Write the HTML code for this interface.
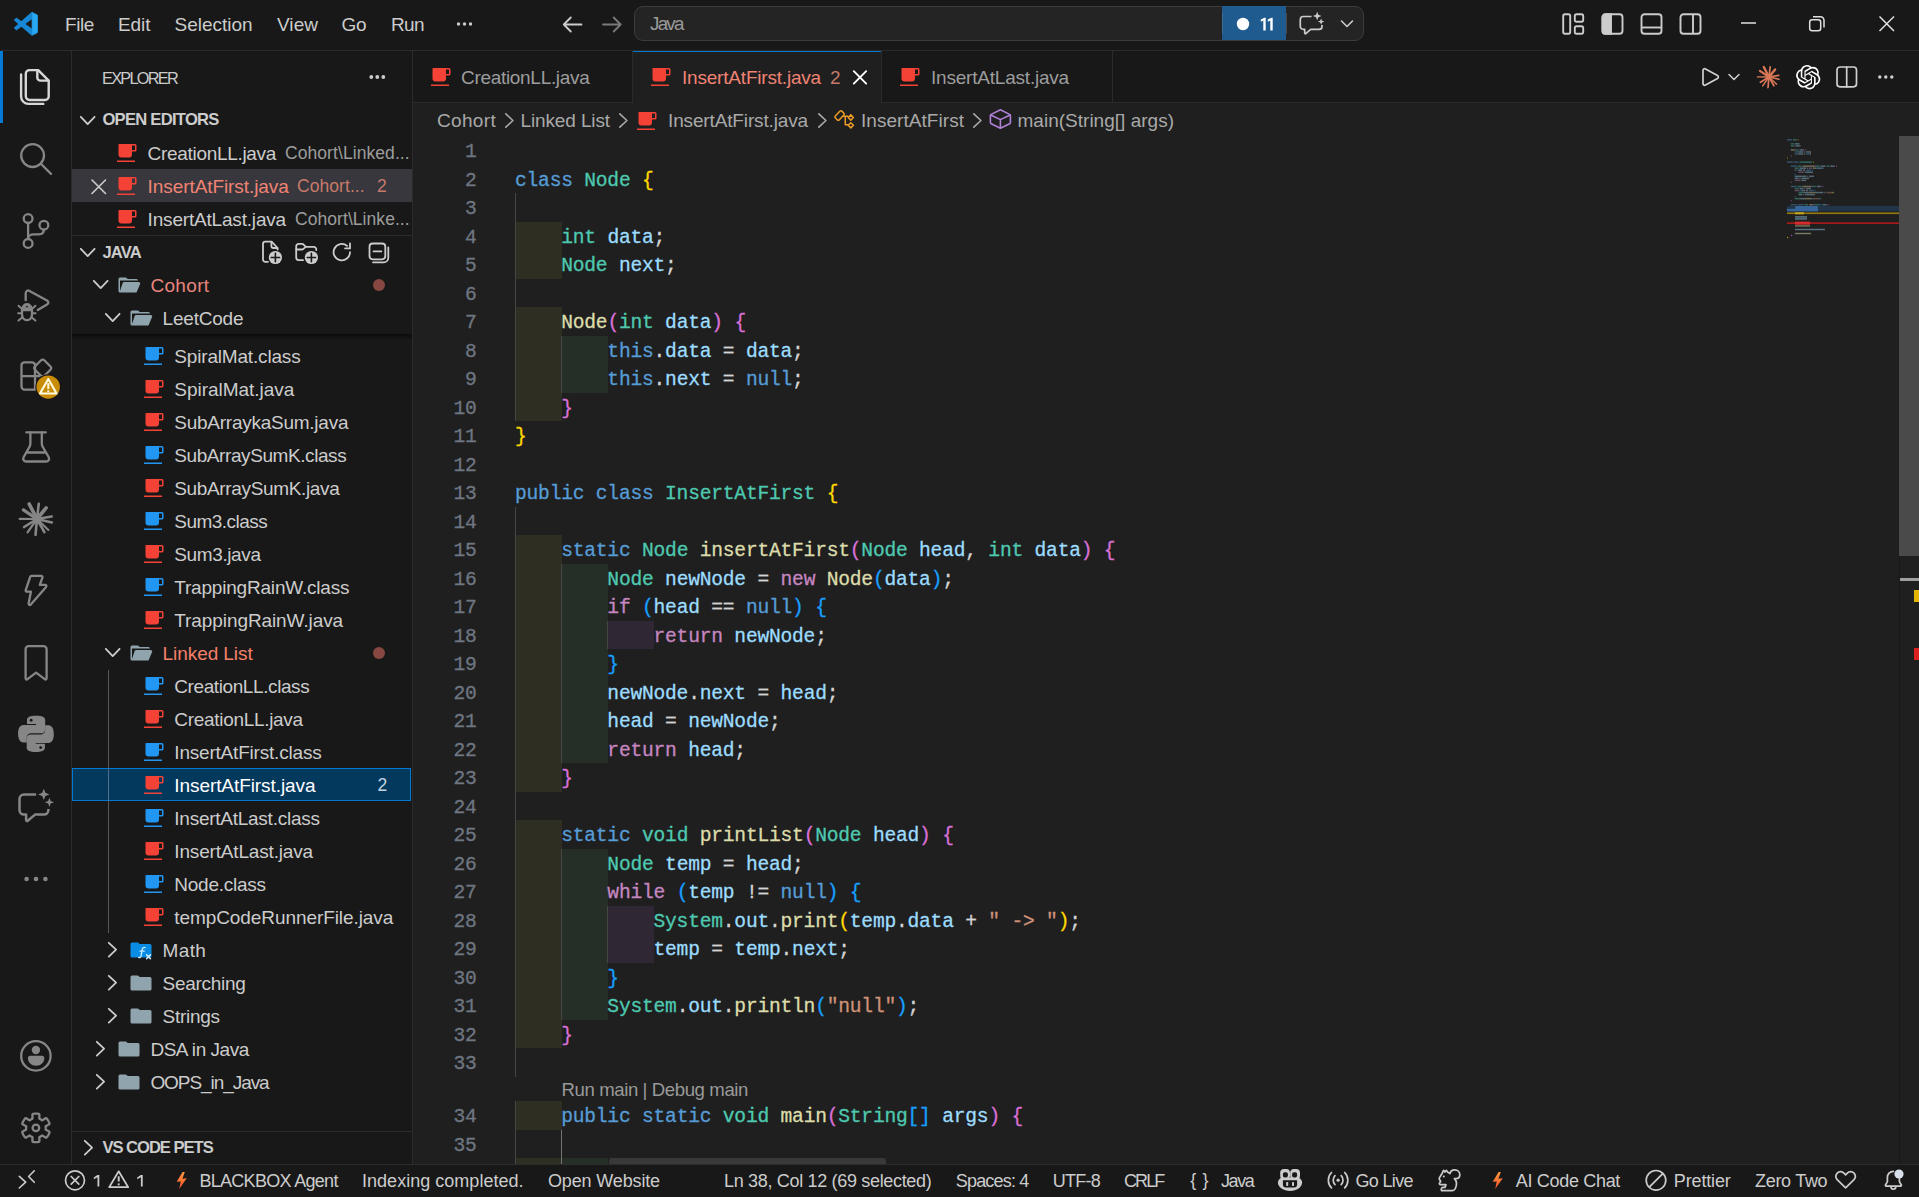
<!DOCTYPE html>
<html><head><meta charset="utf-8"><title>InsertAtFirst.java - Java - Visual Studio Code</title>
<style>
html,body{margin:0;padding:0;background:#1f1f1f;}
body{width:1919px;height:1197px;overflow:hidden;position:relative;font-family:"Liberation Sans",sans-serif;}
.a{position:absolute;}
.t{position:absolute;white-space:pre;}
svg{position:absolute;overflow:visible;}
.ln{position:absolute;left:413px;width:63.5px;text-align:right;font-family:"Liberation Mono",monospace;font-size:19.6px;letter-spacing:-0.215px;color:#6e7681;white-space:pre;-webkit-text-stroke:0.3px currentColor;}
.cl{position:absolute;left:515px;font-family:"Liberation Mono",monospace;font-size:19.6px;letter-spacing:-0.215px;color:#d4d4d4;white-space:pre;-webkit-text-stroke:0.3px currentColor;}
.k{color:#569cd6}.ty{color:#4ec9b0}.c{color:#c586c0}.f{color:#dcdcaa}.v{color:#9cdcfe}.s{color:#ce9178}
.b1{color:#ffd700}.b2{color:#da70d6}.b3{color:#179fff}
</style></head>
<body>
<div class="a" style="left:0px;top:0px;width:1919px;height:50px;background:#181818;"></div>
<div class="a" style="left:0px;top:50px;width:1919px;height:1px;background:#2b2b2b;"></div>
<div class="a" style="left:0px;top:51px;width:71px;height:1113px;background:#181818;"></div>
<div class="a" style="left:71px;top:51px;width:1px;height:1113px;background:#2b2b2b;"></div>
<div class="a" style="left:72px;top:51px;width:340px;height:1113px;background:#181818;"></div>
<div class="a" style="left:412px;top:51px;width:1px;height:1113px;background:#2b2b2b;"></div>
<div class="a" style="left:413px;top:51px;width:1506px;height:51px;background:#181818;"></div>
<div class="a" style="left:413px;top:102px;width:1506px;height:1px;background:#2b2b2b;"></div>
<div class="a" style="left:0px;top:1164px;width:1919px;height:33px;background:#181818;"></div>
<div class="a" style="left:0px;top:1164px;width:1919px;height:1px;background:#2b2b2b;"></div>
<svg style="left:0;top:0" width="50" height="50"><g stroke-linejoin="round" stroke-width="0.7"><path fill="#1788d6" stroke="#1788d6" d="M31.700 12.300 31.700 19 16.500 30 14.100 27.900z"/><path fill="#1788d6" stroke="#1788d6" d="M31.700 35.300 31.700 28.700 16.500 18.100 14.100 20.100z"/><path fill="#27a6f2" stroke="#27a6f2" d="M32.100 12.300 37.200 14.900 37.500 15.600 37.500 32.100 37.200 32.800 32.100 35.300z"/></g></svg>
<svg style="left:455px;top:20px" width="20" height="8"><circle cx="3.5" cy="4" r="1.7" fill="#ccc"/><circle cx="9.5" cy="4" r="1.7" fill="#ccc"/><circle cx="15.500" cy="4" r="1.7" fill="#ccc"/></svg>
<svg style="left:560px;top:12px" width="66" height="26" fill="none" stroke-width="1.8" stroke-linecap="round" stroke-linejoin="round"><path stroke="#cccccc" d="M21.500 12.500H3.800M10.800 5.500 3.800 12.500 10.800 19.500"/><path stroke="#7a7a7a" d="M43 12.500H60.700M53.700 5.500 60.700 12.500 53.700 19.500"/></svg>
<div class="a" style="left:634px;top:6px;width:728px;height:33px;background:#242424;border:1px solid #3c3c3c;border-radius:9px;box-sizing:content-box"></div>
<div class="a" style="left:1222px;top:6px;width:64px;height:34.3px;background:#1f5b8e;"></div>
<svg style="left:1222px;top:7px" width="142" height="33"><circle cx="21" cy="17" r="6.200" fill="#fff"/><rect x="0" y="6" width="1" height="21" fill="#3c6d98"/><rect x="64" y="6" width="1" height="21" fill="#4a4a4a"/></svg>
<svg style="left:1260.300px;top:14px" width="20" height="20"><path fill="#fff" d="M5.700 3.700V16.500H3.300V6.500L.8 7.700V5.500L4.400 3.700zM12.700 3.700V16.500H10.300V6.500L7.800 7.700V5.500L11.400 3.700z"/></svg>
<svg style="left:0;top:0" width="1400" height="50" fill="none" stroke="#cccccc" stroke-width="1.700" stroke-linecap="butt" stroke-linejoin="round"><path d="M1311.500 16.500H1303.300a3 3 0 0 0-3 3V26.400a3 3 0 0 0 3 3h1.400v3.700c0 .6.700.9 1.100.5l4.900-4.200h8.300a3 3 0 0 0 3-3v-1.400"/><path fill="#cccccc" stroke="none" d="M1317.200 11.800l1.150 3.050 3.050 1.150-3.050 1.150-1.150 3.050-1.150-3.050-3.050-1.150 3.050-1.150zM1321.100 18.400l.9 2.300 2.300.9-2.300.9-.9 2.300-.9-2.300-2.300-.9 2.300-.9z"/></svg>
<svg style="left:1340px;top:19px" width="14" height="10" fill="none" stroke="#cccccc" stroke-width="1.600" stroke-linecap="round" stroke-linejoin="round"><path d="M1.500 2 7 7.500 12.500 2"/></svg>
<svg style="left:1560px;top:12px" width="150" height="26" fill="none" stroke="#cccccc" stroke-width="1.900">
<rect x="3.200" y="2.300" width="7" height="19.400" rx="1.800"/><rect x="14.800" y="2.300" width="8.400" height="7.400" rx="1.800"/><rect x="14.800" y="14.300" width="8.400" height="7.400" rx="1.800"/>
<rect x="42.500" y="2.300" width="20" height="19.400" rx="3"/><path d="M42.500 5.300a3 3 0 0 1 3-3H51v19.400h-5.500a3 3 0 0 1-3-3z" fill="#cccccc"/>
<rect x="81.500" y="2.300" width="20" height="19.400" rx="3"/><path d="M81.500 15.500h20"/>
<rect x="120.500" y="2.300" width="20" height="19.400" rx="3"/><path d="M133 2.300v19.400"/>
</svg>
<svg style="left:1736px;top:10px" width="170" height="30" fill="none" stroke="#e0e0e0" stroke-width="1.500"><path d="M5 13h15"/><rect x="73.700" y="9.700" width="11" height="11" rx="2.500"/><path d="M77 6.700h7.500a3.500 3.500 0 0 1 3.500 3.500V17.500" /><path d="M143.500 6.500l14.500 14.500M158 6.500l-14.500 14.500"/></svg>
<div class="a" style="left:0px;top:51px;width:3px;height:72px;background:#0078d4;"></div>
<svg style="left:0;top:0" width="72" height="1164"><g stroke="#d7d7d7" stroke-width="2.400" fill="none" stroke-linejoin="round" stroke-linecap="round"><path d="M37.300 70.100H29.500a3.700 3.700 0 0 0-3.700 3.700V96.300a3.700 3.700 0 0 0 3.700 3.700H45a3.700 3.700 0 0 0 3.700-3.700V80.600L38.200 70.100z"/><path d="M37.300 70.300V77.400a3.200 3.200 0 0 0 3.200 3.200H48.500"/><path d="M21.100 74.500V96.500a7.400 7.400 0 0 0 7.400 7.400H43.300"/></g><g stroke="#868686" stroke-width="2.300" fill="none" stroke-linecap="round"><circle cx="32.600" cy="155.600" r="11.400"/><path d="M40.900 163.700 51 173.900"/></g><g stroke="#868686" stroke-width="2.300" fill="none" stroke-linecap="round"><circle cx="28.100" cy="218.600" r="4.400"/><circle cx="43.900" cy="225.200" r="4.400"/><circle cx="28.100" cy="243.400" r="4.400"/><path d="M28.100 223V239"/><path d="M43.900 229.600c0 3-2 4.800-5 4.800H33.500c-3 0-5.400 1.800-5.400 4.400"/></g><g stroke="#868686" stroke-width="2.300" fill="none" stroke-linecap="round" stroke-linejoin="round"><path d="M25.700 300.200V293.300c0-2.300 1.900-3.400 3.800-2.400L47 300.500c1.800 1 1.800 2.900 0 3.900L37.700 310"/><path d="M22 310.500c0-3.400 2-6.300 5-6.300s5 2.900 5 6.300v3.700c0 3.400-2.200 5.900-5 5.900s-5-2.500-5-5.900z"/><path d="M22.300 310.200H31.700"/><path d="M18.500 305.800l3.200 3M35.400 305.800l-3.200 3M18.200 313.300H22M32 313.300h3.600M18.500 320.600l3.600-3.200M35.400 320.600l-3.600-3.200" stroke-width="2"/></g><path d="M22.600 309.800c0-3.400 1.900-5.600 4.400-5.600s4.400 2.200 4.400 5.600z" fill="#868686"/><path d="M25.300 307.300l1.700-1.500 1.700 1.500z" fill="#181818"/><g stroke="#868686" stroke-width="2.300" fill="none" stroke-linejoin="round"><path d="M24.500 362.300H32a3 3 0 0 1 3 3V389.600H24.500a3 3 0 0 1-3-3V365.300a3 3 0 0 1 3-3z"/><path d="M21.500 376.100H46.500a0 0 0 0 1 0 0V386.600a3 3 0 0 1-3 3H35"/><path d="M41.100 360.300a2.200 2.200 0 0 1 3.200 0l6.200 6.200a2.200 2.200 0 0 1 0 3.200l-6.200 6.200a2.200 2.200 0 0 1-3.200 0l-6.200-6.200a2.200 2.200 0 0 1 0-3.200z"/></g><circle cx="48.200" cy="387.100" r="12.800" fill="#181818"/><circle cx="48.200" cy="387.100" r="11.700" fill="#c98c06"/><g stroke="#fffbe0" fill="none" stroke-linejoin="round" stroke-linecap="round"><path d="M48.300 379 56.600 393.500H40z" stroke-width="2.100"/><path d="M48.300 383.200V389" stroke-width="2" stroke-linecap="butt"/><path d="M48.300 390.300V392" stroke-width="2" stroke-linecap="butt"/></g><g stroke="#868686" stroke-width="2.300" fill="none" stroke-linecap="round" stroke-linejoin="round"><path d="M26.300 432.300H45.800"/><path d="M30.400 432.500V443.500c0 1.200-.3 2.200-.9 3.200L23.700 457c-1.200 2.200.1 4.500 2.600 4.500H46c2.500 0 3.800-2.300 2.600-4.500L42.700 446.700c-.6-1-.9-2-.9-3.200V432.500"/><path d="M26.800 452.500H45.400"/></g><g stroke="#868686" stroke-linecap="round" fill="none"><path d="M37.00 519.00L29.18 504.00" stroke-width="3.60"/><path d="M37.00 519.00L38.75 503.89" stroke-width="2.60"/><path d="M37.00 519.00L46.16 507.79" stroke-width="3.60"/><path d="M37.00 519.00L51.62 516.43" stroke-width="2.60"/><path d="M37.00 519.00L51.83 522.41" stroke-width="2.60"/><path d="M37.00 519.00L48.41 529.94" stroke-width="2.20"/><path d="M37.00 519.00L44.37 532.17" stroke-width="2.60"/><path d="M37.00 519.00L35.52 534.81" stroke-width="2.60"/><path d="M37.00 519.00L27.53 532.40" stroke-width="2.20"/><path d="M37.00 519.00L24.10 527.01" stroke-width="2.60"/><path d="M37.00 519.00L19.60 518.81" stroke-width="2.20"/><path d="M37.00 519.00L23.37 509.92" stroke-width="3.30"/><circle cx="37" cy="519" r="4.20" fill="#868686" stroke="none"/></g><path d="M31.400 575.900H41.200c.9 0 1.500.8 1.200 1.700L39.800 584.900h5.300c1.100 0 1.700 1.200 1 2.100L30.800 604.600c-.9 1-2.400.2-2.200-1.100L30.900 591.700H26.900c-.8 0-1.400-.7-1.200-1.500L30.200 576.800c.2-.6.700-.9 1.200-.9z" stroke="#868686" stroke-width="2.300" fill="none" stroke-linejoin="round"/><path d="M28.600 646.200H43.600a3 3 0 0 1 3 3V678.300c0 1-1.100 1.500-1.900.9L36.100 672.600 27.500 679.200c-.8.600-1.900.1-1.900-.9V649.200a3 3 0 0 1 3-3z" stroke="#868686" stroke-width="2.300" fill="none" stroke-linejoin="round"/><g transform="translate(8 706) scale(0.04678)" fill="#868686"><path d="M405 385 L405 300 C405 240 470 210 600 210 C730 210 795 240 795 300 L795 500 C795 550 760 585 710 585 L500 585 C440 585 400 620 400 680 L400 780 L330 780 C250 780 215 700 215 590 C215 480 250 405 330 405 L600 405 L600 385 Z"/><path d="M405 385 L405 300 C405 240 470 210 600 210 C730 210 795 240 795 300 L795 500 C795 550 760 585 710 585 L500 585 C440 585 400 620 400 680 L400 780 L330 780 C250 780 215 700 215 590 C215 480 250 405 330 405 L600 405 L600 385 Z" transform="rotate(180 597 597)"/><circle cx="495" cy="305" r="30" fill="#181818"/><circle cx="699" cy="889" r="30" fill="#181818"/></g><g stroke="#868686" stroke-width="2.500" fill="none" stroke-linecap="butt" stroke-linejoin="round"><path d="M36.100 794.500H24a4.500 4.500 0 0 0-4.500 4.500V810.100a4.500 4.500 0 0 0 4.500 4.500h2.100V820c0 .9 1 1.400 1.700.8L35 814.600H43.900a4.500 4.500 0 0 0 4.500-4.500V809"/></g><path fill="#868686" d="M43.800 788.700l1.600 4.100 4.100 1.600-4.100 1.600-1.600 4.100-1.600-4.100-4.100-1.600 4.100-1.600zM49.400 797.700l1.250 3.350 3.350 1.250-3.350 1.250-1.250 3.350-1.250-3.350-3.350-1.250 3.350-1.250z"/><g fill="#868686"><circle cx="26.600" cy="879" r="2.300"/><circle cx="36" cy="879" r="2.300"/><circle cx="45.400" cy="879" r="2.300"/></g><circle cx="35.900" cy="1055.900" r="14.700" stroke="#868686" stroke-width="2.300" fill="none"/><circle cx="35.900" cy="1050" r="4.200" fill="#868686"/><path d="M30.100 1055.800H42.100c1.300 0 2.200 1 2.200 2.200 0 4.600-3.500 7.700-8.200 7.700s-8.200-3.100-8.200-7.700c0-1.200.9-2.200 2.200-2.200z" fill="#868686"/><path d="M45.70 1127.90L45.70 1128.07L45.69 1128.24L45.69 1128.41L45.68 1128.58L45.66 1128.75L45.65 1128.92L45.63 1129.09L45.60 1129.26L45.58 1129.43L45.70 1129.63L46.11 1129.88L46.73 1130.20L47.48 1130.57L48.24 1130.98L48.89 1131.38L49.36 1131.76L49.55 1132.07L49.50 1132.32L49.42 1132.56L49.34 1132.79L49.25 1133.02L49.16 1133.26L49.06 1133.49L48.96 1133.72L48.86 1133.94L48.75 1134.17L48.64 1134.39L48.53 1134.61L48.41 1134.83L48.28 1135.05L48.16 1135.27L48.03 1135.48L47.89 1135.69L47.76 1135.90L47.61 1136.10L47.47 1136.31L47.32 1136.51L47.17 1136.70L47.01 1136.90L46.85 1137.09L46.69 1137.28L46.53 1137.47L46.34 1137.64L45.97 1137.62L45.41 1137.41L44.73 1137.05L44.00 1136.59L43.31 1136.13L42.72 1135.75L42.30 1135.53L42.07 1135.52L41.93 1135.62L41.80 1135.73L41.66 1135.83L41.52 1135.93L41.38 1136.02L41.24 1136.12L41.09 1136.21L40.95 1136.30L40.80 1136.39L40.65 1136.47L40.50 1136.55L40.35 1136.63L40.20 1136.71L40.04 1136.78L39.89 1136.85L39.73 1136.92L39.57 1136.99L39.41 1137.05L39.30 1137.26L39.29 1137.73L39.32 1138.43L39.37 1139.26L39.40 1140.12L39.38 1140.89L39.29 1141.48L39.11 1141.81L38.87 1141.89L38.63 1141.94L38.38 1141.98L38.14 1142.02L37.89 1142.06L37.64 1142.09L37.39 1142.12L37.15 1142.15L36.90 1142.17L36.65 1142.18L36.40 1142.19L36.15 1142.20L35.90 1142.20L35.65 1142.20L35.40 1142.19L35.15 1142.18L34.90 1142.17L34.65 1142.15L34.41 1142.12L34.16 1142.09L33.91 1142.06L33.66 1142.02L33.42 1141.98L33.17 1141.94L32.93 1141.89L32.69 1141.81L32.51 1141.48L32.42 1140.89L32.40 1140.12L32.43 1139.26L32.48 1138.43L32.51 1137.73L32.50 1137.26L32.39 1137.05L32.23 1136.99L32.07 1136.92L31.91 1136.85L31.76 1136.78L31.60 1136.71L31.45 1136.63L31.30 1136.55L31.15 1136.47L31.00 1136.39L30.85 1136.30L30.71 1136.21L30.56 1136.12L30.42 1136.02L30.28 1135.93L30.14 1135.83L30.00 1135.73L29.87 1135.62L29.73 1135.52L29.50 1135.53L29.08 1135.75L28.49 1136.13L27.80 1136.59L27.07 1137.05L26.39 1137.41L25.83 1137.62L25.46 1137.64L25.27 1137.47L25.11 1137.28L24.95 1137.09L24.79 1136.90L24.63 1136.70L24.48 1136.51L24.33 1136.31L24.19 1136.10L24.04 1135.90L23.91 1135.69L23.77 1135.48L23.64 1135.27L23.52 1135.05L23.39 1134.83L23.27 1134.61L23.16 1134.39L23.05 1134.17L22.94 1133.94L22.84 1133.72L22.74 1133.49L22.64 1133.26L22.55 1133.02L22.46 1132.79L22.38 1132.56L22.30 1132.32L22.25 1132.07L22.44 1131.76L22.91 1131.38L23.56 1130.98L24.32 1130.57L25.07 1130.20L25.69 1129.88L26.10 1129.63L26.22 1129.43L26.20 1129.26L26.17 1129.09L26.15 1128.92L26.14 1128.75L26.12 1128.58L26.11 1128.41L26.11 1128.24L26.10 1128.07L26.10 1127.90L26.10 1127.73L26.11 1127.56L26.11 1127.39L26.12 1127.22L26.14 1127.05L26.15 1126.88L26.17 1126.71L26.20 1126.54L26.22 1126.37L26.10 1126.17L25.69 1125.92L25.07 1125.60L24.32 1125.23L23.56 1124.82L22.91 1124.42L22.44 1124.04L22.25 1123.73L22.30 1123.48L22.38 1123.24L22.46 1123.01L22.55 1122.78L22.64 1122.54L22.74 1122.31L22.84 1122.08L22.94 1121.86L23.05 1121.63L23.16 1121.41L23.27 1121.19L23.39 1120.97L23.52 1120.75L23.64 1120.53L23.77 1120.32L23.91 1120.11L24.04 1119.90L24.19 1119.70L24.33 1119.49L24.48 1119.29L24.63 1119.10L24.79 1118.90L24.95 1118.71L25.11 1118.52L25.27 1118.33L25.46 1118.16L25.83 1118.18L26.39 1118.39L27.07 1118.75L27.80 1119.21L28.49 1119.67L29.08 1120.05L29.50 1120.27L29.73 1120.28L29.87 1120.18L30.00 1120.07L30.14 1119.97L30.28 1119.87L30.42 1119.78L30.56 1119.68L30.71 1119.59L30.85 1119.50L31.00 1119.41L31.15 1119.33L31.30 1119.25L31.45 1119.17L31.60 1119.09L31.76 1119.02L31.91 1118.95L32.07 1118.88L32.23 1118.81L32.39 1118.75L32.50 1118.54L32.51 1118.07L32.48 1117.37L32.43 1116.54L32.40 1115.68L32.42 1114.91L32.51 1114.32L32.69 1113.99L32.93 1113.91L33.17 1113.86L33.42 1113.82L33.66 1113.78L33.91 1113.74L34.16 1113.71L34.41 1113.68L34.65 1113.65L34.90 1113.63L35.15 1113.62L35.40 1113.61L35.65 1113.60L35.90 1113.60L36.15 1113.60L36.40 1113.61L36.65 1113.62L36.90 1113.63L37.15 1113.65L37.39 1113.68L37.64 1113.71L37.89 1113.74L38.14 1113.78L38.38 1113.82L38.63 1113.86L38.87 1113.91L39.11 1113.99L39.29 1114.32L39.38 1114.91L39.40 1115.68L39.37 1116.54L39.32 1117.37L39.29 1118.07L39.30 1118.54L39.41 1118.75L39.57 1118.81L39.73 1118.88L39.89 1118.95L40.04 1119.02L40.20 1119.09L40.35 1119.17L40.50 1119.25L40.65 1119.33L40.80 1119.41L40.95 1119.50L41.09 1119.59L41.24 1119.68L41.38 1119.78L41.52 1119.87L41.66 1119.97L41.80 1120.07L41.93 1120.18L42.07 1120.28L42.30 1120.27L42.72 1120.05L43.31 1119.67L44.00 1119.21L44.73 1118.75L45.41 1118.39L45.97 1118.18L46.34 1118.16L46.53 1118.33L46.69 1118.52L46.85 1118.71L47.01 1118.90L47.17 1119.10L47.32 1119.29L47.47 1119.49L47.61 1119.70L47.76 1119.90L47.89 1120.11L48.03 1120.32L48.16 1120.53L48.28 1120.75L48.41 1120.97L48.53 1121.19L48.64 1121.41L48.75 1121.63L48.86 1121.86L48.96 1122.08L49.06 1122.31L49.16 1122.54L49.25 1122.78L49.34 1123.01L49.42 1123.24L49.50 1123.48L49.55 1123.73L49.36 1124.04L48.89 1124.42L48.24 1124.82L47.48 1125.23L46.73 1125.60L46.11 1125.92L45.70 1126.17L45.58 1126.37L45.60 1126.54L45.63 1126.71L45.65 1126.88L45.66 1127.05L45.68 1127.22L45.69 1127.39L45.69 1127.56L45.70 1127.73Z" stroke="#868686" stroke-width="2.300" fill="none" stroke-linejoin="round"/><circle cx="35.900" cy="1127.900" r="3.300" stroke="#868686" stroke-width="2.300" fill="none"/></svg>
<svg style="left:368px;top:73px" width="20" height="8"><circle cx="3.300" cy="4" r="1.900" fill="#ccc"/><circle cx="9.300" cy="4" r="1.900" fill="#ccc"/><circle cx="15.300" cy="4" r="1.900" fill="#ccc"/></svg>
<svg style="left:79.5px;top:115.50px" width="15.4" height="10.4" fill="none" stroke="#cccccc" stroke-width="1.8" stroke-linecap="round" stroke-linejoin="round"><path d="M0.800 0.800 7.70 8.10 14.60 0.800"/></svg>
<div class="a" style="left:72px;top:169px;width:339.5px;height:33px;background:#37373d;"></div>
<svg style="left:114px;top:141px" width="24" height="24" viewBox="0 0 32 32"><path fill="#f44336" d="M4 26h24v2H4zM28 4H7a1 1 0 0 0-1 1v13a4 4 0 0 0 4 4h10a4 4 0 0 0 4-4v-4h4a2 2 0 0 0 2-2V6a2 2 0 0 0-2-2m0 8h-4V6h4z"/></svg>
<svg style="left:114px;top:174px" width="24" height="24" viewBox="0 0 32 32"><path fill="#f44336" d="M4 26h24v2H4zM28 4H7a1 1 0 0 0-1 1v13a4 4 0 0 0 4 4h10a4 4 0 0 0 4-4v-4h4a2 2 0 0 0 2-2V6a2 2 0 0 0-2-2m0 8h-4V6h4z"/></svg>
<svg style="left:114px;top:207px" width="24" height="24" viewBox="0 0 32 32"><path fill="#f44336" d="M4 26h24v2H4zM28 4H7a1 1 0 0 0-1 1v13a4 4 0 0 0 4 4h10a4 4 0 0 0 4-4v-4h4a2 2 0 0 0 2-2V6a2 2 0 0 0-2-2m0 8h-4V6h4z"/></svg>
<svg style="left:90px;top:178px" width="18" height="18" fill="none" stroke="#cccccc" stroke-width="1.600" stroke-linecap="round"><path d="M2 2 15.500 15.500M15.500 2 2 15.500"/></svg>
<div class="a" style="left:72px;top:235px;width:340px;height:1px;background:#2b2b2b;"></div>
<svg style="left:79.5px;top:248.30px" width="15.4" height="10.4" fill="none" stroke="#cccccc" stroke-width="1.8" stroke-linecap="round" stroke-linejoin="round"><path d="M0.800 0.800 7.70 8.10 14.60 0.800"/></svg>
<svg style="left:254px;top:236px" width="144" height="34" fill="none" stroke="#cccccc" stroke-width="1.800" stroke-linejoin="round" stroke-linecap="round">
<path d="M14 25.800H11.300a2.300 2.300 0 0 1-2.300-2.300V8a2.300 2.300 0 0 1 2.300-2.300H17.600L23.600 12V13.500"/><path d="M17.400 6V10a2 2 0 0 0 2 2H23.300"/>
<circle cx="21.400" cy="21.500" r="6.600" fill="#cccccc" stroke="none"/><path d="M21.400 17.300v8.400M17.200 21.500h8.400" stroke="#181818" stroke-width="1.600"/>
<path d="M49 24.200H44.800a2.600 2.600 0 0 1-2.600-2.600V10.500a2.600 2.600 0 0 1 2.600-2.600H47.800c.8 0 1.500.3 2 .9L52 10.900H59.700a2.600 2.600 0 0 1 2.600 2.600V14"/><path d="M42.300 13.500H47.600c.8 0 1.500-.3 2-.9l2.200-1.700"/>
<circle cx="57.400" cy="21.500" r="6.600" fill="#cccccc" stroke="none"/><path d="M57.400 17.300v8.400M53.200 21.500h8.400" stroke="#181818" stroke-width="1.600"/>
<path d="M96 16.100a8.200 8.200 0 1 1-2.900-6.200"/><path d="M96 7.500v4.900h-4.900"/>
<rect x="115.500" y="7.500" width="15.800" height="15.800" rx="3.200"/><path d="M119.500 15.400h7.800"/><path d="M119 26.300H129.800a4.500 4.500 0 0 0 4.500-4.500V11.500"/>
</svg>
<svg style="left:92.6px;top:280.40px" width="15.4" height="10.4" fill="none" stroke="#cccccc" stroke-width="1.8" stroke-linecap="round" stroke-linejoin="round"><path d="M0.800 0.800 7.70 8.10 14.60 0.800"/></svg>
<svg style="left:117px;top:273px" width="24" height="24" viewBox="0 0 32 32"><path fill="#90a4ae" d="M28.967 12H9.442a2 2 0 0 0-1.898 1.368L4 24V10h24a2 2 0 0 0-2-2H15.124a2 2 0 0 1-1.280-.464l-1.288-1.072A2 2 0 0 0 11.276 6H4a2 2 0 0 0-2 2v16a2 2 0 0 0 2 2h22l4.805-11.212A2 2 0 0 0 28.967 12"/></svg>
<div class="a" style="left:373.300px;top:279px;width:12px;height:12px;border-radius:6px;background:#864741"></div>
<svg style="left:104.6px;top:313.40px" width="15.4" height="10.4" fill="none" stroke="#cccccc" stroke-width="1.8" stroke-linecap="round" stroke-linejoin="round"><path d="M0.800 0.800 7.70 8.10 14.60 0.800"/></svg>
<svg style="left:129px;top:306px" width="24" height="24" viewBox="0 0 32 32"><path fill="#90a4ae" d="M28.967 12H9.442a2 2 0 0 0-1.898 1.368L4 24V10h24a2 2 0 0 0-2-2H15.124a2 2 0 0 1-1.280-.464l-1.288-1.072A2 2 0 0 0 11.276 6H4a2 2 0 0 0-2 2v16a2 2 0 0 0 2 2h22l4.805-11.212A2 2 0 0 0 28.967 12"/></svg>
<div class="a" style="left:72px;top:333.500px;width:340px;height:6px;background:linear-gradient(#0b0b0b,rgba(24,24,24,0))"></div>
<svg style="left:141px;top:344px" width="24" height="24" viewBox="0 0 32 32"><path fill="#2196f3" d="M4 26h24v2H4zM28 4H7a1 1 0 0 0-1 1v13a4 4 0 0 0 4 4h10a4 4 0 0 0 4-4v-4h4a2 2 0 0 0 2-2V6a2 2 0 0 0-2-2m0 8h-4V6h4z"/></svg>
<svg style="left:141px;top:377px" width="24" height="24" viewBox="0 0 32 32"><path fill="#f44336" d="M4 26h24v2H4zM28 4H7a1 1 0 0 0-1 1v13a4 4 0 0 0 4 4h10a4 4 0 0 0 4-4v-4h4a2 2 0 0 0 2-2V6a2 2 0 0 0-2-2m0 8h-4V6h4z"/></svg>
<svg style="left:141px;top:410px" width="24" height="24" viewBox="0 0 32 32"><path fill="#f44336" d="M4 26h24v2H4zM28 4H7a1 1 0 0 0-1 1v13a4 4 0 0 0 4 4h10a4 4 0 0 0 4-4v-4h4a2 2 0 0 0 2-2V6a2 2 0 0 0-2-2m0 8h-4V6h4z"/></svg>
<svg style="left:141px;top:443px" width="24" height="24" viewBox="0 0 32 32"><path fill="#2196f3" d="M4 26h24v2H4zM28 4H7a1 1 0 0 0-1 1v13a4 4 0 0 0 4 4h10a4 4 0 0 0 4-4v-4h4a2 2 0 0 0 2-2V6a2 2 0 0 0-2-2m0 8h-4V6h4z"/></svg>
<svg style="left:141px;top:476px" width="24" height="24" viewBox="0 0 32 32"><path fill="#f44336" d="M4 26h24v2H4zM28 4H7a1 1 0 0 0-1 1v13a4 4 0 0 0 4 4h10a4 4 0 0 0 4-4v-4h4a2 2 0 0 0 2-2V6a2 2 0 0 0-2-2m0 8h-4V6h4z"/></svg>
<svg style="left:141px;top:509px" width="24" height="24" viewBox="0 0 32 32"><path fill="#2196f3" d="M4 26h24v2H4zM28 4H7a1 1 0 0 0-1 1v13a4 4 0 0 0 4 4h10a4 4 0 0 0 4-4v-4h4a2 2 0 0 0 2-2V6a2 2 0 0 0-2-2m0 8h-4V6h4z"/></svg>
<svg style="left:141px;top:542px" width="24" height="24" viewBox="0 0 32 32"><path fill="#f44336" d="M4 26h24v2H4zM28 4H7a1 1 0 0 0-1 1v13a4 4 0 0 0 4 4h10a4 4 0 0 0 4-4v-4h4a2 2 0 0 0 2-2V6a2 2 0 0 0-2-2m0 8h-4V6h4z"/></svg>
<svg style="left:141px;top:575px" width="24" height="24" viewBox="0 0 32 32"><path fill="#2196f3" d="M4 26h24v2H4zM28 4H7a1 1 0 0 0-1 1v13a4 4 0 0 0 4 4h10a4 4 0 0 0 4-4v-4h4a2 2 0 0 0 2-2V6a2 2 0 0 0-2-2m0 8h-4V6h4z"/></svg>
<svg style="left:141px;top:608px" width="24" height="24" viewBox="0 0 32 32"><path fill="#f44336" d="M4 26h24v2H4zM28 4H7a1 1 0 0 0-1 1v13a4 4 0 0 0 4 4h10a4 4 0 0 0 4-4v-4h4a2 2 0 0 0 2-2V6a2 2 0 0 0-2-2m0 8h-4V6h4z"/></svg>
<svg style="left:104.6px;top:648.40px" width="15.4" height="10.4" fill="none" stroke="#cccccc" stroke-width="1.8" stroke-linecap="round" stroke-linejoin="round"><path d="M0.800 0.800 7.70 8.10 14.60 0.800"/></svg>
<svg style="left:129px;top:641px" width="24" height="24" viewBox="0 0 32 32"><path fill="#90a4ae" d="M28.967 12H9.442a2 2 0 0 0-1.898 1.368L4 24V10h24a2 2 0 0 0-2-2H15.124a2 2 0 0 1-1.280-.464l-1.288-1.072A2 2 0 0 0 11.276 6H4a2 2 0 0 0-2 2v16a2 2 0 0 0 2 2h22l4.805-11.212A2 2 0 0 0 28.967 12"/></svg>
<div class="a" style="left:373.300px;top:647px;width:12px;height:12px;border-radius:6px;background:#864741"></div>
<div class="a" style="left:108px;top:669.5px;width:1px;height:263px;background:#585858;"></div>
<div class="a" style="left:72px;top:768px;width:339px;height:33px;background:#04395e;box-sizing:border-box;border:1.500px solid #0078d4"></div>
<svg style="left:141px;top:674px" width="24" height="24" viewBox="0 0 32 32"><path fill="#2196f3" d="M4 26h24v2H4zM28 4H7a1 1 0 0 0-1 1v13a4 4 0 0 0 4 4h10a4 4 0 0 0 4-4v-4h4a2 2 0 0 0 2-2V6a2 2 0 0 0-2-2m0 8h-4V6h4z"/></svg>
<svg style="left:141px;top:707px" width="24" height="24" viewBox="0 0 32 32"><path fill="#f44336" d="M4 26h24v2H4zM28 4H7a1 1 0 0 0-1 1v13a4 4 0 0 0 4 4h10a4 4 0 0 0 4-4v-4h4a2 2 0 0 0 2-2V6a2 2 0 0 0-2-2m0 8h-4V6h4z"/></svg>
<svg style="left:141px;top:740px" width="24" height="24" viewBox="0 0 32 32"><path fill="#2196f3" d="M4 26h24v2H4zM28 4H7a1 1 0 0 0-1 1v13a4 4 0 0 0 4 4h10a4 4 0 0 0 4-4v-4h4a2 2 0 0 0 2-2V6a2 2 0 0 0-2-2m0 8h-4V6h4z"/></svg>
<svg style="left:141px;top:773px" width="24" height="24" viewBox="0 0 32 32"><path fill="#f44336" d="M4 26h24v2H4zM28 4H7a1 1 0 0 0-1 1v13a4 4 0 0 0 4 4h10a4 4 0 0 0 4-4v-4h4a2 2 0 0 0 2-2V6a2 2 0 0 0-2-2m0 8h-4V6h4z"/></svg>
<svg style="left:141px;top:806px" width="24" height="24" viewBox="0 0 32 32"><path fill="#2196f3" d="M4 26h24v2H4zM28 4H7a1 1 0 0 0-1 1v13a4 4 0 0 0 4 4h10a4 4 0 0 0 4-4v-4h4a2 2 0 0 0 2-2V6a2 2 0 0 0-2-2m0 8h-4V6h4z"/></svg>
<svg style="left:141px;top:839px" width="24" height="24" viewBox="0 0 32 32"><path fill="#f44336" d="M4 26h24v2H4zM28 4H7a1 1 0 0 0-1 1v13a4 4 0 0 0 4 4h10a4 4 0 0 0 4-4v-4h4a2 2 0 0 0 2-2V6a2 2 0 0 0-2-2m0 8h-4V6h4z"/></svg>
<svg style="left:141px;top:872px" width="24" height="24" viewBox="0 0 32 32"><path fill="#2196f3" d="M4 26h24v2H4zM28 4H7a1 1 0 0 0-1 1v13a4 4 0 0 0 4 4h10a4 4 0 0 0 4-4v-4h4a2 2 0 0 0 2-2V6a2 2 0 0 0-2-2m0 8h-4V6h4z"/></svg>
<svg style="left:141px;top:905px" width="24" height="24" viewBox="0 0 32 32"><path fill="#f44336" d="M4 26h24v2H4zM28 4H7a1 1 0 0 0-1 1v13a4 4 0 0 0 4 4h10a4 4 0 0 0 4-4v-4h4a2 2 0 0 0 2-2V6a2 2 0 0 0-2-2m0 8h-4V6h4z"/></svg>
<div class="a" style="left:108px;top:768px;width:1px;height:33px;background:#4f6f8a;"></div>
<svg style="left:108.2px;top:942.10px" width="10.4" height="15.4" fill="none" stroke="#cccccc" stroke-width="1.8" stroke-linecap="round" stroke-linejoin="round"><path d="M0.800 0.800 8.10 7.70 0.800 14.60"/></svg>
<svg style="left:129px;top:938px" width="24" height="24" viewBox="0 0 32 32"><path fill="#0b8ce4" d="m13.844 7.536-1.288-1.072A2 2 0 0 0 11.276 6H4a2 2 0 0 0-2 2v16a2 2 0 0 0 2 2h24a2 2 0 0 0 2-2V10a2 2 0 0 0-2-2H15.124a2 2 0 0 1-1.280-.464"/><path fill="none" stroke="#c9ecff" stroke-width="1.800" stroke-linecap="round" d="M21.500 12.800c-2.200-.8-3.500.4-3.900 2.500l-1.500 8.500c-.4 2-1.600 2.900-3.300 2.100M14.800 17.500h5.500"/><path fill="none" stroke="#c9ecff" stroke-width="2" stroke-linecap="round" d="M23.500 22.500l5 5M28.500 22.500l-5 5"/></svg>
<svg style="left:108.2px;top:975.10px" width="10.4" height="15.4" fill="none" stroke="#cccccc" stroke-width="1.8" stroke-linecap="round" stroke-linejoin="round"><path d="M0.800 0.800 8.10 7.70 0.800 14.60"/></svg>
<svg style="left:129px;top:971px" width="24" height="24" viewBox="0 0 32 32"><path fill="#90a4ae" d="m13.844 7.536-1.288-1.072A2 2 0 0 0 11.276 6H4a2 2 0 0 0-2 2v16a2 2 0 0 0 2 2h24a2 2 0 0 0 2-2V10a2 2 0 0 0-2-2H15.124a2 2 0 0 1-1.280-.464"/></svg>
<svg style="left:108.2px;top:1008.10px" width="10.4" height="15.4" fill="none" stroke="#cccccc" stroke-width="1.8" stroke-linecap="round" stroke-linejoin="round"><path d="M0.800 0.800 8.10 7.70 0.800 14.60"/></svg>
<svg style="left:129px;top:1004px" width="24" height="24" viewBox="0 0 32 32"><path fill="#90a4ae" d="m13.844 7.536-1.288-1.072A2 2 0 0 0 11.276 6H4a2 2 0 0 0-2 2v16a2 2 0 0 0 2 2h24a2 2 0 0 0 2-2V10a2 2 0 0 0-2-2H15.124a2 2 0 0 1-1.280-.464"/></svg>
<svg style="left:96.2px;top:1041.10px" width="10.4" height="15.4" fill="none" stroke="#cccccc" stroke-width="1.8" stroke-linecap="round" stroke-linejoin="round"><path d="M0.800 0.800 8.10 7.70 0.800 14.60"/></svg>
<svg style="left:117px;top:1037px" width="24" height="24" viewBox="0 0 32 32"><path fill="#90a4ae" d="m13.844 7.536-1.288-1.072A2 2 0 0 0 11.276 6H4a2 2 0 0 0-2 2v16a2 2 0 0 0 2 2h24a2 2 0 0 0 2-2V10a2 2 0 0 0-2-2H15.124a2 2 0 0 1-1.280-.464"/></svg>
<svg style="left:96.2px;top:1074.10px" width="10.4" height="15.4" fill="none" stroke="#cccccc" stroke-width="1.8" stroke-linecap="round" stroke-linejoin="round"><path d="M0.800 0.800 8.10 7.70 0.800 14.60"/></svg>
<svg style="left:117px;top:1070px" width="24" height="24" viewBox="0 0 32 32"><path fill="#90a4ae" d="m13.844 7.536-1.288-1.072A2 2 0 0 0 11.276 6H4a2 2 0 0 0-2 2v16a2 2 0 0 0 2 2h24a2 2 0 0 0 2-2V10a2 2 0 0 0-2-2H15.124a2 2 0 0 1-1.280-.464"/></svg>
<div class="a" style="left:72px;top:1131px;width:340px;height:1px;background:#2b2b2b;"></div>
<svg style="left:84px;top:1139.80px" width="10.4" height="15.4" fill="none" stroke="#cccccc" stroke-width="1.8" stroke-linecap="round" stroke-linejoin="round"><path d="M0.800 0.800 8.10 7.70 0.800 14.60"/></svg>
<div class="a" style="left:632px;top:51px;width:1px;height:51px;background:#2b2b2b;"></div>
<div class="a" style="left:633px;top:51px;width:248px;height:52px;background:#1f1f1f;"></div>
<div class="a" style="left:633px;top:51px;width:248px;height:1px;background:#0078d4;"></div>
<div class="a" style="left:881px;top:51px;width:1px;height:51px;background:#2b2b2b;"></div>
<div class="a" style="left:1112px;top:51px;width:1px;height:51px;background:#2b2b2b;"></div>
<svg style="left:428px;top:65px" width="24" height="24" viewBox="0 0 32 32"><path fill="#f44336" d="M4 26h24v2H4zM28 4H7a1 1 0 0 0-1 1v13a4 4 0 0 0 4 4h10a4 4 0 0 0 4-4v-4h4a2 2 0 0 0 2-2V6a2 2 0 0 0-2-2m0 8h-4V6h4z"/></svg>
<svg style="left:648px;top:65px" width="24" height="24" viewBox="0 0 32 32"><path fill="#f44336" d="M4 26h24v2H4zM28 4H7a1 1 0 0 0-1 1v13a4 4 0 0 0 4 4h10a4 4 0 0 0 4-4v-4h4a2 2 0 0 0 2-2V6a2 2 0 0 0-2-2m0 8h-4V6h4z"/></svg>
<svg style="left:851px;top:68px" width="18" height="18" fill="none" stroke="#ffffff" stroke-width="1.900" stroke-linecap="round"><path d="M2.800 3.200 15.200 15.600M15.200 3.200 2.800 15.600"/></svg>
<svg style="left:897px;top:65px" width="24" height="24" viewBox="0 0 32 32"><path fill="#f44336" d="M4 26h24v2H4zM28 4H7a1 1 0 0 0-1 1v13a4 4 0 0 0 4 4h10a4 4 0 0 0 4-4v-4h4a2 2 0 0 0 2-2V6a2 2 0 0 0-2-2m0 8h-4V6h4z"/></svg>
<svg style="left:1690px;top:60px" width="220" height="36" fill="none" stroke="#d0d0d0" stroke-width="1.700" stroke-linejoin="round" stroke-linecap="round">
<path d="M13 10.500c0-1.500 1.200-2.200 2.500-1.500l12 6.600c1.200.7 1.200 2.100 0 2.800l-12 6.600c-1.300.7-2.500 0-2.500-1.500z"/>
<path d="M39 14.500 44 19.500 49 14.500" stroke-width="1.500"/>
<rect x="147" y="7" width="19.500" height="19.800" rx="3"/><path d="M156.700 7v19.800"/>
<g fill="#d0d0d0" stroke="none"><circle cx="189.800" cy="17" r="1.700"/><circle cx="195.800" cy="17" r="1.700"/><circle cx="201.800" cy="17" r="1.700"/></g>
</svg>
<svg style="left:0;top:0" width="1919" height="110"><g stroke="#d97757" stroke-linecap="round" fill="none"><path d="M1769.00 77.00L1763.79 66.99" stroke-width="2.40"/><path d="M1769.00 77.00L1770.17 66.92" stroke-width="1.73"/><path d="M1769.00 77.00L1775.11 69.53" stroke-width="2.40"/><path d="M1769.00 77.00L1778.75 75.28" stroke-width="1.73"/><path d="M1769.00 77.00L1778.89 79.27" stroke-width="1.73"/><path d="M1769.00 77.00L1776.61 84.30" stroke-width="1.47"/><path d="M1769.00 77.00L1773.91 85.78" stroke-width="1.73"/><path d="M1769.00 77.00L1768.01 87.54" stroke-width="1.73"/><path d="M1769.00 77.00L1762.69 85.94" stroke-width="1.47"/><path d="M1769.00 77.00L1760.40 82.35" stroke-width="1.73"/><path d="M1769.00 77.00L1757.39 76.87" stroke-width="1.47"/><path d="M1769.00 77.00L1759.91 70.94" stroke-width="2.20"/><circle cx="1769" cy="77" r="2.80" fill="#d97757" stroke="none"/></g></svg>
<svg style="left:1795.800px;top:64.900px" width="24.400" height="24.400" viewBox="0 0 24 24"><path fill="#ffffff" d="M22.2819 9.8211a5.9847 5.9847 0 0 0-.5157-4.9108 6.0462 6.0462 0 0 0-6.5098-2.9A6.0651 6.0651 0 0 0 4.9807 4.1818a5.9847 5.9847 0 0 0-3.9977 2.9 6.0462 6.0462 0 0 0 .7427 7.0966 5.98 5.98 0 0 0 .511 4.9107 6.051 6.051 0 0 0 6.5146 2.9001A5.9847 5.9847 0 0 0 13.2599 24a6.0557 6.0557 0 0 0 5.7718-4.2058 5.9894 5.9894 0 0 0 3.9977-2.9001 6.0557 6.0557 0 0 0-.7475-7.0729zm-9.022 12.6081a4.4755 4.4755 0 0 1-2.8764-1.0408l.1419-.0804 4.7783-2.7582a.7948.7948 0 0 0 .3927-.6813v-6.7369l2.02 1.1686a.071.071 0 0 1 .038.052v5.5826a4.504 4.504 0 0 1-4.4945 4.4944zm-9.6607-4.1254a4.4708 4.4708 0 0 1-.5346-3.0137l.142.0852 4.783 2.7582a.7712.7712 0 0 0 .7806 0l5.8428-3.3685v2.3324a.0804.0804 0 0 1-.0332.0615L9.74 19.9502a4.4992 4.4992 0 0 1-6.1408-1.6464zM2.3408 7.8956a4.485 4.485 0 0 1 2.3655-1.9728V11.6a.7664.7664 0 0 0 .3879.6765l5.8144 3.3543-2.0201 1.1685a.0757.0757 0 0 1-.071 0l-4.8303-2.7865A4.504 4.504 0 0 1 2.3408 7.872zm16.5963 3.8558L13.1038 8.364 15.1192 7.2a.0757.0757 0 0 1 .071 0l4.8303 2.7913a4.4944 4.4944 0 0 1-.6765 8.1042v-5.6772a.79.79 0 0 0-.407-.667zm2.0107-3.0231l-.142-.0852-4.7735-2.7818a.7759.7759 0 0 0-.7854 0L9.409 9.2297V6.8974a.0662.0662 0 0 1 .0284-.0615l4.8303-2.7866a4.4992 4.4992 0 0 1 6.6802 4.66zM8.3065 12.863l-2.02-1.1638a.0804.0804 0 0 1-.038-.0567V6.0742a4.4992 4.4992 0 0 1 7.3757-3.4537l-.142.0805L8.704 5.459a.7948.7948 0 0 0-.3927.6813zm1.0976-2.3654l2.602-1.4998 2.6069 1.4998v2.9994l-2.5974 1.4997-2.6067-1.4997Z"/></svg>
<svg style="left:634px;top:108.5px" width="24" height="24" viewBox="0 0 32 32"><path fill="#f44336" d="M4 26h24v2H4zM28 4H7a1 1 0 0 0-1 1v13a4 4 0 0 0 4 4h10a4 4 0 0 0 4-4v-4h4a2 2 0 0 0 2-2V6a2 2 0 0 0-2-2m0 8h-4V6h4z"/></svg>
<svg style="left:505px;top:113.00px" width="10.2" height="15" fill="none" stroke="#a9a9a9" stroke-width="1.6" stroke-linecap="round" stroke-linejoin="round"><path d="M0.800 0.800 7.90 7.50 0.800 14.20"/></svg>
<svg style="left:619px;top:113.00px" width="10.2" height="15" fill="none" stroke="#a9a9a9" stroke-width="1.6" stroke-linecap="round" stroke-linejoin="round"><path d="M0.800 0.800 7.90 7.50 0.800 14.20"/></svg>
<svg style="left:817.5px;top:113.00px" width="10.2" height="15" fill="none" stroke="#a9a9a9" stroke-width="1.6" stroke-linecap="round" stroke-linejoin="round"><path d="M0.800 0.800 7.90 7.50 0.800 14.20"/></svg>
<svg style="left:973px;top:113.00px" width="10.2" height="15" fill="none" stroke="#a9a9a9" stroke-width="1.6" stroke-linecap="round" stroke-linejoin="round"><path d="M0.800 0.800 7.90 7.50 0.800 14.20"/></svg>
<svg style="left:0;top:0" width="900" height="140" fill="none" stroke="#ee9d28" stroke-width="1.500" stroke-linejoin="round"><path d="M835.300 116.100 840.100 111.100a1.200 1.200 0 0 1 1.700 0L843.900 113.300a1.200 1.200 0 0 1 0 1.700L839.100 120a1.200 1.200 0 0 1-1.700 0L835.300 117.800a1.200 1.200 0 0 1 0-1.700z"/><path d="M843.200 116.300H848.200M845.300 116.300V124.700H848.200"/><path d="M848.200 117.500 850.800 114.900 853.400 117.500 850.800 120.100z"/><path d="M848.200 125.300 850.800 122.700 853.400 125.300 850.800 127.900z"/></svg>
<svg style="left:0;top:0" width="1100" height="140" fill="none" stroke="#b180d7" stroke-width="1.600" stroke-linejoin="round" stroke-linecap="round"><path d="M1000.400 109.800 1009.600 114.400c.5.300.800.700.800 1.300V122.400c0 .6-.3 1-.800 1.300L1000.400 128.200 991.200 123.700c-.5-.3-.8-.700-.800-1.300V115.700c0-.6.300-1 .800-1.300z"/><path d="M990.700 115 1000.400 119.600 1010.100 115M1000.400 119.600V128"/></svg>
<div class="a" style="left:515.8px;top:221.5px;width:46.18px;height:28.5px;background:#2e2e22;"></div>
<div class="a" style="left:515.8px;top:250.0px;width:46.18px;height:28.5px;background:#2e2e22;"></div>
<div class="a" style="left:515.8px;top:307.0px;width:46.18px;height:28.5px;background:#2e2e22;"></div>
<div class="a" style="left:515.8px;top:335.5px;width:46.18px;height:28.5px;background:#2e2e22;"></div>
<div class="a" style="left:561.98px;top:335.5px;width:46.18px;height:28.5px;background:#252e27;"></div>
<div class="a" style="left:515.8px;top:364.0px;width:46.18px;height:28.5px;background:#2e2e22;"></div>
<div class="a" style="left:561.98px;top:364.0px;width:46.18px;height:28.5px;background:#252e27;"></div>
<div class="a" style="left:515.8px;top:392.5px;width:46.18px;height:28.5px;background:#2e2e22;"></div>
<div class="a" style="left:515.8px;top:535.0px;width:46.18px;height:28.5px;background:#2e2e22;"></div>
<div class="a" style="left:515.8px;top:563.5px;width:46.18px;height:28.5px;background:#2e2e22;"></div>
<div class="a" style="left:561.98px;top:563.5px;width:46.18px;height:28.5px;background:#252e27;"></div>
<div class="a" style="left:515.8px;top:592.0px;width:46.18px;height:28.5px;background:#2e2e22;"></div>
<div class="a" style="left:561.98px;top:592.0px;width:46.18px;height:28.5px;background:#252e27;"></div>
<div class="a" style="left:515.8px;top:620.5px;width:46.18px;height:28.5px;background:#2e2e22;"></div>
<div class="a" style="left:561.98px;top:620.5px;width:46.18px;height:28.5px;background:#252e27;"></div>
<div class="a" style="left:608.16px;top:620.5px;width:46.18px;height:28.5px;background:#2f2734;"></div>
<div class="a" style="left:515.8px;top:649.0px;width:46.18px;height:28.5px;background:#2e2e22;"></div>
<div class="a" style="left:561.98px;top:649.0px;width:46.18px;height:28.5px;background:#252e27;"></div>
<div class="a" style="left:515.8px;top:677.5px;width:46.18px;height:28.5px;background:#2e2e22;"></div>
<div class="a" style="left:561.98px;top:677.5px;width:46.18px;height:28.5px;background:#252e27;"></div>
<div class="a" style="left:515.8px;top:706.0px;width:46.18px;height:28.5px;background:#2e2e22;"></div>
<div class="a" style="left:561.98px;top:706.0px;width:46.18px;height:28.5px;background:#252e27;"></div>
<div class="a" style="left:515.8px;top:734.5px;width:46.18px;height:28.5px;background:#2e2e22;"></div>
<div class="a" style="left:561.98px;top:734.5px;width:46.18px;height:28.5px;background:#252e27;"></div>
<div class="a" style="left:515.8px;top:763.0px;width:46.18px;height:28.5px;background:#2e2e22;"></div>
<div class="a" style="left:515.8px;top:820.0px;width:46.18px;height:28.5px;background:#2e2e22;"></div>
<div class="a" style="left:515.8px;top:848.5px;width:46.18px;height:28.5px;background:#2e2e22;"></div>
<div class="a" style="left:561.98px;top:848.5px;width:46.18px;height:28.5px;background:#252e27;"></div>
<div class="a" style="left:515.8px;top:877.0px;width:46.18px;height:28.5px;background:#2e2e22;"></div>
<div class="a" style="left:561.98px;top:877.0px;width:46.18px;height:28.5px;background:#252e27;"></div>
<div class="a" style="left:515.8px;top:905.5px;width:46.18px;height:28.5px;background:#2e2e22;"></div>
<div class="a" style="left:561.98px;top:905.5px;width:46.18px;height:28.5px;background:#252e27;"></div>
<div class="a" style="left:608.16px;top:905.5px;width:46.18px;height:28.5px;background:#2f2734;"></div>
<div class="a" style="left:515.8px;top:934.0px;width:46.18px;height:28.5px;background:#2e2e22;"></div>
<div class="a" style="left:561.98px;top:934.0px;width:46.18px;height:28.5px;background:#252e27;"></div>
<div class="a" style="left:608.16px;top:934.0px;width:46.18px;height:28.5px;background:#2f2734;"></div>
<div class="a" style="left:515.8px;top:962.5px;width:46.18px;height:28.5px;background:#2e2e22;"></div>
<div class="a" style="left:561.98px;top:962.5px;width:46.18px;height:28.5px;background:#252e27;"></div>
<div class="a" style="left:515.8px;top:991.0px;width:46.18px;height:28.5px;background:#2e2e22;"></div>
<div class="a" style="left:561.98px;top:991.0px;width:46.18px;height:28.5px;background:#252e27;"></div>
<div class="a" style="left:515.8px;top:1019.5px;width:46.18px;height:28.5px;background:#2e2e22;"></div>
<div class="a" style="left:515.8px;top:1101.0px;width:46.18px;height:28.5px;background:#2e2e22;"></div>
<div class="a" style="left:515.8px;top:1158.0px;width:46.18px;height:6.0px;background:#2e2e22;"></div>
<div class="a" style="left:561.98px;top:1158.0px;width:46.18px;height:6.0px;background:#252e27;"></div>
<div class="a" style="left:515px;top:193.0px;width:1px;height:228.0px;background:#464644;"></div>
<div class="a" style="left:561px;top:335.5px;width:1px;height:57.0px;background:#464644;"></div>
<div class="a" style="left:515px;top:506.5px;width:1px;height:570.0px;background:#464644;"></div>
<div class="a" style="left:561px;top:563.5px;width:1px;height:199.5px;background:#464644;"></div>
<div class="a" style="left:607px;top:620.5px;width:1px;height:28.5px;background:#464644;"></div>
<div class="a" style="left:561px;top:848.5px;width:1px;height:171.0px;background:#464644;"></div>
<div class="a" style="left:607px;top:905.5px;width:1px;height:57.0px;background:#464644;"></div>
<div class="a" style="left:515px;top:1101.0px;width:1px;height:63.0px;background:#464644;"></div>
<div class="a" style="left:561px;top:1129.5px;width:1px;height:34.5px;background:#747474;"></div>
<div class="ln" style="top:138.30px;line-height:28.5px">1</div>
<div class="ln" style="top:166.80px;line-height:28.5px">2</div>
<div class="cl" style="top:166.80px;line-height:28.5px"><span class="k">class</span> <span class="ty">Node</span> <span class="b1">{</span></div>
<div class="ln" style="top:195.30px;line-height:28.5px">3</div>
<div class="ln" style="top:223.80px;line-height:28.5px">4</div>
<div class="cl" style="top:223.80px;line-height:28.5px">    <span class="ty">int</span> <span class="v">data</span>;</div>
<div class="ln" style="top:252.30px;line-height:28.5px">5</div>
<div class="cl" style="top:252.30px;line-height:28.5px">    <span class="ty">Node</span> <span class="v">next</span>;</div>
<div class="ln" style="top:280.80px;line-height:28.5px">6</div>
<div class="ln" style="top:309.30px;line-height:28.5px">7</div>
<div class="cl" style="top:309.30px;line-height:28.5px">    <span class="f">Node</span><span class="b2">(</span><span class="ty">int</span> <span class="v">data</span><span class="b2">)</span> <span class="b2">{</span></div>
<div class="ln" style="top:337.80px;line-height:28.5px">8</div>
<div class="cl" style="top:337.80px;line-height:28.5px">        <span class="k">this</span>.<span class="v">data</span> = <span class="v">data</span>;</div>
<div class="ln" style="top:366.30px;line-height:28.5px">9</div>
<div class="cl" style="top:366.30px;line-height:28.5px">        <span class="k">this</span>.<span class="v">next</span> = <span class="k">null</span>;</div>
<div class="ln" style="top:394.80px;line-height:28.5px">10</div>
<div class="cl" style="top:394.80px;line-height:28.5px">    <span class="b2">}</span></div>
<div class="ln" style="top:423.30px;line-height:28.5px">11</div>
<div class="cl" style="top:423.30px;line-height:28.5px"><span class="b1">}</span></div>
<div class="ln" style="top:451.80px;line-height:28.5px">12</div>
<div class="ln" style="top:480.30px;line-height:28.5px">13</div>
<div class="cl" style="top:480.30px;line-height:28.5px"><span class="k">public</span> <span class="k">class</span> <span class="ty">InsertAtFirst</span> <span class="b1">{</span></div>
<div class="ln" style="top:508.80px;line-height:28.5px">14</div>
<div class="ln" style="top:537.30px;line-height:28.5px">15</div>
<div class="cl" style="top:537.30px;line-height:28.5px">    <span class="k">static</span> <span class="ty">Node</span> <span class="f">insertAtFirst</span><span class="b2">(</span><span class="ty">Node</span> <span class="v">head</span>, <span class="ty">int</span> <span class="v">data</span><span class="b2">)</span> <span class="b2">{</span></div>
<div class="ln" style="top:565.80px;line-height:28.5px">16</div>
<div class="cl" style="top:565.80px;line-height:28.5px">        <span class="ty">Node</span> <span class="v">newNode</span> = <span class="c">new</span> <span class="f">Node</span><span class="b3">(</span><span class="v">data</span><span class="b3">)</span>;</div>
<div class="ln" style="top:594.30px;line-height:28.5px">17</div>
<div class="cl" style="top:594.30px;line-height:28.5px">        <span class="c">if</span> <span class="b3">(</span><span class="v">head</span> == <span class="k">null</span><span class="b3">)</span> <span class="b3">{</span></div>
<div class="ln" style="top:622.80px;line-height:28.5px">18</div>
<div class="cl" style="top:622.80px;line-height:28.5px">            <span class="c">return</span> <span class="v">newNode</span>;</div>
<div class="ln" style="top:651.30px;line-height:28.5px">19</div>
<div class="cl" style="top:651.30px;line-height:28.5px">        <span class="b3">}</span></div>
<div class="ln" style="top:679.80px;line-height:28.5px">20</div>
<div class="cl" style="top:679.80px;line-height:28.5px">        <span class="v">newNode</span>.<span class="v">next</span> = <span class="v">head</span>;</div>
<div class="ln" style="top:708.30px;line-height:28.5px">21</div>
<div class="cl" style="top:708.30px;line-height:28.5px">        <span class="v">head</span> = <span class="v">newNode</span>;</div>
<div class="ln" style="top:736.80px;line-height:28.5px">22</div>
<div class="cl" style="top:736.80px;line-height:28.5px">        <span class="c">return</span> <span class="v">head</span>;</div>
<div class="ln" style="top:765.30px;line-height:28.5px">23</div>
<div class="cl" style="top:765.30px;line-height:28.5px">    <span class="b2">}</span></div>
<div class="ln" style="top:793.80px;line-height:28.5px">24</div>
<div class="ln" style="top:822.30px;line-height:28.5px">25</div>
<div class="cl" style="top:822.30px;line-height:28.5px">    <span class="k">static</span> <span class="ty">void</span> <span class="f">printList</span><span class="b2">(</span><span class="ty">Node</span> <span class="v">head</span><span class="b2">)</span> <span class="b2">{</span></div>
<div class="ln" style="top:850.80px;line-height:28.5px">26</div>
<div class="cl" style="top:850.80px;line-height:28.5px">        <span class="ty">Node</span> <span class="v">temp</span> = <span class="v">head</span>;</div>
<div class="ln" style="top:879.30px;line-height:28.5px">27</div>
<div class="cl" style="top:879.30px;line-height:28.5px">        <span class="c">while</span> <span class="b3">(</span><span class="v">temp</span> != <span class="k">null</span><span class="b3">)</span> <span class="b3">{</span></div>
<div class="ln" style="top:907.80px;line-height:28.5px">28</div>
<div class="cl" style="top:907.80px;line-height:28.5px">            <span class="ty">System</span>.<span class="v">out</span>.<span class="f">print</span><span class="b1">(</span><span class="v">temp</span>.<span class="v">data</span> + <span class="s">&quot; -&gt; &quot;</span><span class="b1">)</span>;</div>
<div class="ln" style="top:936.30px;line-height:28.5px">29</div>
<div class="cl" style="top:936.30px;line-height:28.5px">            <span class="v">temp</span> = <span class="v">temp</span>.<span class="v">next</span>;</div>
<div class="ln" style="top:964.80px;line-height:28.5px">30</div>
<div class="cl" style="top:964.80px;line-height:28.5px">        <span class="b3">}</span></div>
<div class="ln" style="top:993.30px;line-height:28.5px">31</div>
<div class="cl" style="top:993.30px;line-height:28.5px">        <span class="ty">System</span>.<span class="v">out</span>.<span class="f">println</span><span class="b3">(</span><span class="s">&quot;null&quot;</span><span class="b3">)</span>;</div>
<div class="ln" style="top:1021.80px;line-height:28.5px">32</div>
<div class="cl" style="top:1021.80px;line-height:28.5px">    <span class="b2">}</span></div>
<div class="ln" style="top:1050.30px;line-height:28.5px">33</div>
<div class="ln" style="top:1103.30px;line-height:28.5px">34</div>
<div class="cl" style="top:1103.30px;line-height:28.5px">    <span class="k">public</span> <span class="k">static</span> <span class="ty">void</span> <span class="f">main</span><span class="b2">(</span><span class="ty">String</span><span class="b3">[]</span> <span class="v">args</span><span class="b2">)</span> <span class="b2">{</span></div>
<div class="ln" style="top:1131.80px;line-height:28.5px">35</div>
<div class="a" style="left:609px;top:1157.5px;width:276.5px;height:6.5px;background:#39393a;border-radius:3px 3px 0 0"></div>
<svg style="left:0;top:0" width="1919" height="260"><rect x="1787.0" y="139.03" width="4.8" height="1.500" fill="#569cd6" opacity="0.400"/><rect x="1792.8" y="139.03" width="3.8" height="1.500" fill="#4ec9b0" opacity="0.400"/><rect x="1797.6" y="139.03" width="1.0" height="1.500" fill="#ffd700" opacity="0.400"/><rect x="1790.8" y="143.09" width="2.9" height="1.500" fill="#4ec9b0" opacity="0.400"/><rect x="1794.7" y="143.09" width="3.8" height="1.500" fill="#9cdcfe" opacity="0.400"/><rect x="1798.5" y="143.09" width="1.0" height="1.500" fill="#d4d4d4" opacity="0.400"/><rect x="1790.8" y="145.12" width="3.8" height="1.500" fill="#4ec9b0" opacity="0.400"/><rect x="1795.6" y="145.12" width="3.8" height="1.500" fill="#9cdcfe" opacity="0.400"/><rect x="1799.5" y="145.12" width="1.0" height="1.500" fill="#d4d4d4" opacity="0.400"/><rect x="1790.8" y="149.18" width="3.8" height="1.500" fill="#dcdcaa" opacity="0.400"/><rect x="1794.7" y="149.18" width="1.0" height="1.500" fill="#da70d6" opacity="0.400"/><rect x="1795.6" y="149.18" width="2.9" height="1.500" fill="#4ec9b0" opacity="0.400"/><rect x="1799.5" y="149.18" width="3.8" height="1.500" fill="#9cdcfe" opacity="0.400"/><rect x="1803.3" y="149.18" width="1.0" height="1.500" fill="#da70d6" opacity="0.400"/><rect x="1805.2" y="149.18" width="1.0" height="1.500" fill="#da70d6" opacity="0.400"/><rect x="1794.7" y="151.21" width="3.8" height="1.500" fill="#569cd6" opacity="0.400"/><rect x="1798.5" y="151.21" width="1.0" height="1.500" fill="#d4d4d4" opacity="0.400"/><rect x="1799.5" y="151.21" width="3.8" height="1.500" fill="#9cdcfe" opacity="0.400"/><rect x="1804.3" y="151.21" width="1.0" height="1.500" fill="#d4d4d4" opacity="0.400"/><rect x="1806.2" y="151.21" width="3.8" height="1.500" fill="#9cdcfe" opacity="0.400"/><rect x="1810.0" y="151.21" width="1.0" height="1.500" fill="#d4d4d4" opacity="0.400"/><rect x="1794.7" y="153.24" width="3.8" height="1.500" fill="#569cd6" opacity="0.400"/><rect x="1798.5" y="153.24" width="1.0" height="1.500" fill="#d4d4d4" opacity="0.400"/><rect x="1799.5" y="153.24" width="3.8" height="1.500" fill="#9cdcfe" opacity="0.400"/><rect x="1804.3" y="153.24" width="1.0" height="1.500" fill="#d4d4d4" opacity="0.400"/><rect x="1806.2" y="153.24" width="3.8" height="1.500" fill="#569cd6" opacity="0.400"/><rect x="1810.0" y="153.24" width="1.0" height="1.500" fill="#d4d4d4" opacity="0.400"/><rect x="1790.8" y="155.27" width="1.0" height="1.500" fill="#da70d6" opacity="0.400"/><rect x="1787.0" y="157.30" width="1.0" height="1.500" fill="#ffd700" opacity="0.400"/><rect x="1787.0" y="161.36" width="5.8" height="1.500" fill="#569cd6" opacity="0.400"/><rect x="1793.7" y="161.36" width="4.8" height="1.500" fill="#569cd6" opacity="0.400"/><rect x="1799.5" y="161.36" width="12.5" height="1.500" fill="#4ec9b0" opacity="0.400"/><rect x="1812.9" y="161.36" width="1.0" height="1.500" fill="#ffd700" opacity="0.400"/><rect x="1790.8" y="165.42" width="5.8" height="1.500" fill="#569cd6" opacity="0.400"/><rect x="1797.6" y="165.42" width="3.8" height="1.500" fill="#4ec9b0" opacity="0.400"/><rect x="1802.4" y="165.42" width="12.5" height="1.500" fill="#dcdcaa" opacity="0.400"/><rect x="1814.8" y="165.42" width="1.0" height="1.500" fill="#da70d6" opacity="0.400"/><rect x="1815.8" y="165.42" width="3.8" height="1.500" fill="#4ec9b0" opacity="0.400"/><rect x="1820.6" y="165.42" width="3.8" height="1.500" fill="#9cdcfe" opacity="0.400"/><rect x="1824.4" y="165.42" width="1.0" height="1.500" fill="#d4d4d4" opacity="0.400"/><rect x="1826.4" y="165.42" width="2.9" height="1.500" fill="#4ec9b0" opacity="0.400"/><rect x="1830.2" y="165.42" width="3.8" height="1.500" fill="#9cdcfe" opacity="0.400"/><rect x="1834.0" y="165.42" width="1.0" height="1.500" fill="#da70d6" opacity="0.400"/><rect x="1836.0" y="165.42" width="1.0" height="1.500" fill="#da70d6" opacity="0.400"/><rect x="1794.7" y="167.45" width="3.8" height="1.500" fill="#4ec9b0" opacity="0.400"/><rect x="1799.5" y="167.45" width="6.7" height="1.500" fill="#9cdcfe" opacity="0.400"/><rect x="1807.2" y="167.45" width="1.0" height="1.500" fill="#d4d4d4" opacity="0.400"/><rect x="1809.1" y="167.45" width="2.9" height="1.500" fill="#c586c0" opacity="0.400"/><rect x="1812.9" y="167.45" width="3.8" height="1.500" fill="#dcdcaa" opacity="0.400"/><rect x="1816.8" y="167.45" width="1.0" height="1.500" fill="#179fff" opacity="0.400"/><rect x="1817.7" y="167.45" width="3.8" height="1.500" fill="#9cdcfe" opacity="0.400"/><rect x="1821.6" y="167.45" width="1.0" height="1.500" fill="#179fff" opacity="0.400"/><rect x="1822.5" y="167.45" width="1.0" height="1.500" fill="#d4d4d4" opacity="0.400"/><rect x="1794.7" y="169.48" width="1.9" height="1.500" fill="#c586c0" opacity="0.400"/><rect x="1797.6" y="169.48" width="1.0" height="1.500" fill="#179fff" opacity="0.400"/><rect x="1798.5" y="169.48" width="3.8" height="1.500" fill="#9cdcfe" opacity="0.400"/><rect x="1803.3" y="169.48" width="1.9" height="1.500" fill="#d4d4d4" opacity="0.400"/><rect x="1806.2" y="169.48" width="3.8" height="1.500" fill="#569cd6" opacity="0.400"/><rect x="1810.0" y="169.48" width="1.0" height="1.500" fill="#179fff" opacity="0.400"/><rect x="1812.0" y="169.48" width="1.0" height="1.500" fill="#179fff" opacity="0.400"/><rect x="1798.5" y="171.51" width="5.8" height="1.500" fill="#c586c0" opacity="0.400"/><rect x="1805.2" y="171.51" width="6.7" height="1.500" fill="#9cdcfe" opacity="0.400"/><rect x="1812.0" y="171.51" width="1.0" height="1.500" fill="#d4d4d4" opacity="0.400"/><rect x="1794.7" y="173.54" width="1.0" height="1.500" fill="#179fff" opacity="0.400"/><rect x="1794.7" y="175.57" width="6.7" height="1.500" fill="#9cdcfe" opacity="0.400"/><rect x="1801.4" y="175.57" width="1.0" height="1.500" fill="#d4d4d4" opacity="0.400"/><rect x="1802.4" y="175.57" width="3.8" height="1.500" fill="#9cdcfe" opacity="0.400"/><rect x="1807.2" y="175.57" width="1.0" height="1.500" fill="#d4d4d4" opacity="0.400"/><rect x="1809.1" y="175.57" width="3.8" height="1.500" fill="#9cdcfe" opacity="0.400"/><rect x="1812.9" y="175.57" width="1.0" height="1.500" fill="#d4d4d4" opacity="0.400"/><rect x="1794.7" y="177.60" width="3.8" height="1.500" fill="#9cdcfe" opacity="0.400"/><rect x="1799.5" y="177.60" width="1.0" height="1.500" fill="#d4d4d4" opacity="0.400"/><rect x="1801.4" y="177.60" width="6.7" height="1.500" fill="#9cdcfe" opacity="0.400"/><rect x="1808.1" y="177.60" width="1.0" height="1.500" fill="#d4d4d4" opacity="0.400"/><rect x="1794.7" y="179.63" width="5.8" height="1.500" fill="#c586c0" opacity="0.400"/><rect x="1801.4" y="179.63" width="3.8" height="1.500" fill="#9cdcfe" opacity="0.400"/><rect x="1805.2" y="179.63" width="1.0" height="1.500" fill="#d4d4d4" opacity="0.400"/><rect x="1790.8" y="181.66" width="1.0" height="1.500" fill="#da70d6" opacity="0.400"/><rect x="1790.8" y="185.72" width="5.8" height="1.500" fill="#569cd6" opacity="0.400"/><rect x="1797.6" y="185.72" width="3.8" height="1.500" fill="#4ec9b0" opacity="0.400"/><rect x="1802.4" y="185.72" width="8.6" height="1.500" fill="#dcdcaa" opacity="0.400"/><rect x="1811.0" y="185.72" width="1.0" height="1.500" fill="#da70d6" opacity="0.400"/><rect x="1812.0" y="185.72" width="3.8" height="1.500" fill="#4ec9b0" opacity="0.400"/><rect x="1816.8" y="185.72" width="3.8" height="1.500" fill="#9cdcfe" opacity="0.400"/><rect x="1820.6" y="185.72" width="1.0" height="1.500" fill="#da70d6" opacity="0.400"/><rect x="1822.5" y="185.72" width="1.0" height="1.500" fill="#da70d6" opacity="0.400"/><rect x="1794.7" y="187.75" width="3.8" height="1.500" fill="#4ec9b0" opacity="0.400"/><rect x="1799.5" y="187.75" width="3.8" height="1.500" fill="#9cdcfe" opacity="0.400"/><rect x="1804.3" y="187.75" width="1.0" height="1.500" fill="#d4d4d4" opacity="0.400"/><rect x="1806.2" y="187.75" width="3.8" height="1.500" fill="#9cdcfe" opacity="0.400"/><rect x="1810.0" y="187.75" width="1.0" height="1.500" fill="#d4d4d4" opacity="0.400"/><rect x="1794.7" y="189.78" width="4.8" height="1.500" fill="#c586c0" opacity="0.400"/><rect x="1800.4" y="189.78" width="1.0" height="1.500" fill="#179fff" opacity="0.400"/><rect x="1801.4" y="189.78" width="3.8" height="1.500" fill="#9cdcfe" opacity="0.400"/><rect x="1806.2" y="189.78" width="1.9" height="1.500" fill="#d4d4d4" opacity="0.400"/><rect x="1809.1" y="189.78" width="3.8" height="1.500" fill="#569cd6" opacity="0.400"/><rect x="1812.9" y="189.78" width="1.0" height="1.500" fill="#179fff" opacity="0.400"/><rect x="1814.8" y="189.78" width="1.0" height="1.500" fill="#179fff" opacity="0.400"/><rect x="1798.5" y="191.81" width="5.8" height="1.500" fill="#4ec9b0" opacity="0.400"/><rect x="1804.3" y="191.81" width="1.0" height="1.500" fill="#d4d4d4" opacity="0.400"/><rect x="1805.2" y="191.81" width="2.9" height="1.500" fill="#9cdcfe" opacity="0.400"/><rect x="1808.1" y="191.81" width="1.0" height="1.500" fill="#d4d4d4" opacity="0.400"/><rect x="1809.1" y="191.81" width="4.8" height="1.500" fill="#dcdcaa" opacity="0.400"/><rect x="1813.9" y="191.81" width="1.0" height="1.500" fill="#ffd700" opacity="0.400"/><rect x="1814.8" y="191.81" width="3.8" height="1.500" fill="#9cdcfe" opacity="0.400"/><rect x="1818.7" y="191.81" width="1.0" height="1.500" fill="#d4d4d4" opacity="0.400"/><rect x="1819.6" y="191.81" width="3.8" height="1.500" fill="#9cdcfe" opacity="0.400"/><rect x="1824.4" y="191.81" width="1.0" height="1.500" fill="#d4d4d4" opacity="0.400"/><rect x="1826.4" y="191.81" width="5.8" height="1.500" fill="#ce9178" opacity="0.400"/><rect x="1832.1" y="191.81" width="1.0" height="1.500" fill="#ffd700" opacity="0.400"/><rect x="1833.1" y="191.81" width="1.0" height="1.500" fill="#d4d4d4" opacity="0.400"/><rect x="1798.5" y="193.84" width="3.8" height="1.500" fill="#9cdcfe" opacity="0.400"/><rect x="1803.3" y="193.84" width="1.0" height="1.500" fill="#d4d4d4" opacity="0.400"/><rect x="1805.2" y="193.84" width="3.8" height="1.500" fill="#9cdcfe" opacity="0.400"/><rect x="1809.1" y="193.84" width="1.0" height="1.500" fill="#d4d4d4" opacity="0.400"/><rect x="1810.0" y="193.84" width="3.8" height="1.500" fill="#9cdcfe" opacity="0.400"/><rect x="1813.9" y="193.84" width="1.0" height="1.500" fill="#d4d4d4" opacity="0.400"/><rect x="1794.7" y="195.87" width="1.0" height="1.500" fill="#179fff" opacity="0.400"/><rect x="1794.7" y="197.90" width="5.8" height="1.500" fill="#4ec9b0" opacity="0.400"/><rect x="1800.4" y="197.90" width="1.0" height="1.500" fill="#d4d4d4" opacity="0.400"/><rect x="1801.4" y="197.90" width="2.9" height="1.500" fill="#9cdcfe" opacity="0.400"/><rect x="1804.3" y="197.90" width="1.0" height="1.500" fill="#d4d4d4" opacity="0.400"/><rect x="1805.2" y="197.90" width="6.7" height="1.500" fill="#dcdcaa" opacity="0.400"/><rect x="1812.0" y="197.90" width="1.0" height="1.500" fill="#179fff" opacity="0.400"/><rect x="1812.9" y="197.90" width="5.8" height="1.500" fill="#ce9178" opacity="0.400"/><rect x="1818.7" y="197.90" width="1.0" height="1.500" fill="#179fff" opacity="0.400"/><rect x="1819.6" y="197.90" width="1.0" height="1.500" fill="#d4d4d4" opacity="0.400"/><rect x="1790.8" y="199.93" width="1.0" height="1.500" fill="#da70d6" opacity="0.400"/><rect x="1790.8" y="203.99" width="5.8" height="1.500" fill="#569cd6" opacity="0.400"/><rect x="1797.6" y="203.99" width="5.8" height="1.500" fill="#569cd6" opacity="0.400"/><rect x="1804.3" y="203.99" width="3.8" height="1.500" fill="#4ec9b0" opacity="0.400"/><rect x="1809.1" y="203.99" width="3.8" height="1.500" fill="#dcdcaa" opacity="0.400"/><rect x="1812.9" y="203.99" width="1.0" height="1.500" fill="#da70d6" opacity="0.400"/><rect x="1813.9" y="203.99" width="5.8" height="1.500" fill="#4ec9b0" opacity="0.400"/><rect x="1819.6" y="203.99" width="1.9" height="1.500" fill="#179fff" opacity="0.400"/><rect x="1822.5" y="203.99" width="3.8" height="1.500" fill="#9cdcfe" opacity="0.400"/><rect x="1826.4" y="203.99" width="1.0" height="1.500" fill="#da70d6" opacity="0.400"/><rect x="1828.3" y="203.99" width="1.0" height="1.500" fill="#da70d6" opacity="0.400"/><rect x="1787" y="205.800" width="112" height="5.600" fill="#213448"/><rect x="1795.200" y="206" width="22.600" height="3" fill="#36669a"/><rect x="1787" y="208.800" width="31" height="2.600" fill="#36669a"/><rect x="1787" y="212.400" width="112" height="1.700" fill="#94760f"/><rect x="1795" y="212.300" width="9" height="2" fill="#c8a822"/><rect x="1795" y="216.200" width="12" height="1.400" fill="#9cdcfe" opacity=".5"/><rect x="1795" y="218.200" width="12" height="1.400" fill="#9cdcfe" opacity=".5"/><rect x="1787" y="222.300" width="112" height="1.700" fill="#a51b1b"/><rect x="1795" y="221.600" width="15" height="3.100" fill="#d42c2c"/><rect x="1795" y="225.300" width="15" height="1.300" fill="#dcdcaa" opacity=".5"/><rect x="1795" y="228.800" width="30" height="1.400" fill="#9cdcfe" opacity=".45"/><rect x="1795" y="232.800" width="16" height="1.400" fill="#dcdcaa" opacity=".5"/><rect x="1791" y="234.800" width="1.200" height="1.400" fill="#da70d6" opacity=".6"/><rect x="1787" y="236.800" width="1.200" height="1.400" fill="#ffd700" opacity=".6"/></svg>
<div class="a" style="left:1899px;top:136px;width:1px;height:1028px;background:#191919;"></div>
<div class="a" style="left:1899px;top:136px;width:20px;height:420px;background:#4a4a4a;"></div>
<div class="a" style="left:1900px;top:577.5px;width:19px;height:3px;background:#a0a0a0;"></div>
<div class="a" style="left:1914px;top:589.5px;width:5px;height:12px;background:#e2b400;"></div>
<div class="a" style="left:1914px;top:648px;width:5px;height:12px;background:#dc2020;"></div>
<svg style="left:0;top:0" width="1919" height="1197"><path fill="#cccccc" d="M97.4 1174.900H99.3V1186.500H97.5V1177.300L93.8 1179.300V1177.600z"/><path fill="#cccccc" d="M140.8 1174.900H142.7V1186.500H140.9V1177.300L137.2 1179.300V1177.600z"/><g fill="none" stroke="#cccccc" stroke-width="1.600" stroke-linecap="round" stroke-linejoin="round"><path d="M19.300 1176.300 25.700 1182.200 19.300 1188"/><path d="M34.300 1170.800 28.600 1176.500 34.300 1182.300"/></g><g fill="none" stroke="#cccccc" stroke-width="1.700" stroke-linecap="round"><circle cx="75" cy="1180.300" r="9.500"/><path d="M71.200 1176.500 78.800 1184.100M78.800 1176.500 71.200 1184.100"/></g><g fill="none" stroke="#cccccc" stroke-width="1.700" stroke-linejoin="round" stroke-linecap="round"><path d="M118.700 1171.300 128.200 1187.200H109.200z"/><path d="M118.700 1176.300V1181.500" stroke-width="1.900" stroke-linecap="butt"/><path d="M118.700 1183.400V1185.300" stroke-width="1.900" stroke-linecap="butt"/></g><defs><linearGradient id="bg" x1="0" y1="0" x2="0" y2="1"><stop offset="0" stop-color="#ff9a3c"/><stop offset="1" stop-color="#f4512c"/></linearGradient></defs><path transform="translate(176.4 1172)" fill="url(#bg)" d="M6.200 0 .3 9.800 4.300 9.500 2.800 17 10.300 6.300 6 6.700 8.400 0z"/><path transform="translate(1492.4 1172)" fill="url(#bg)" d="M6.200 0 .3 9.800 4.300 9.500 2.800 17 10.300 6.300 6 6.700 8.400 0z"/><g fill="#cccccc"><rect x="1280.200" y="1169" width="9.800" height="10.600" rx="3.800"/><rect x="1290.200" y="1169" width="9.800" height="10.600" rx="3.800"/><path d="M1281.500 1177.800H1298.700c2 1 3.400 2.700 3.400 4.600 0 4.600-5.400 8.500-12 8.500s-12.200-3.900-12.200-8.500c0-1.900 1.500-3.600 3.600-4.600z"/></g><g fill="#181818"><rect x="1282.900" y="1172.200" width="5" height="5.300" rx="1.900"/><rect x="1292.100" y="1172.200" width="5" height="5.300" rx="1.900"/><path d="M1282.900 1180.300H1297.100V1184.600a3 3 0 0 1-3 3H1285.900a3 3 0 0 1-3-3z"/></g><g fill="#cccccc"><rect x="1286.200" y="1181.900" width="2" height="4" rx=".6"/><rect x="1292" y="1181.900" width="2" height="4" rx=".6"/></g><g fill="none" stroke="#cccccc" stroke-width="1.700" stroke-linecap="round"><path d="M1331.500 1172.500a11 11 0 0 0 0 15.400M1344.700 1172.500a11 11 0 0 1 0 15.400M1335 1175.700a6.500 6.500 0 0 0 0 9M1341.200 1175.700a6.500 6.500 0 0 1 0 9"/><circle cx="1338.100" cy="1180.200" r="1.600" fill="#cccccc" stroke="none"/></g><g fill="none" stroke="#cccccc" stroke-width="1.700" stroke-linejoin="round" stroke-linecap="round"><path d="M1450 1173.600C1450.400 1171.400 1452.300 1169.900 1454.800 1169.900c2.900 0 5 2.200 5 4.900 0 2.400-1.700 3.900-3.800 3.900h-1.600c1.400 1.400 2.100 3 2.100 4.900 0 4-2 7-3.900 7H1441.400c-.5-1.600.2-3.200 1.900-3.200h1.700l1-2.700H1440.400c-.8 0-1.200-.9-.9-1.600l1.200-1.600-1.300-2.200c-.3-.5-.2-1.200.1-1.700l2.700-4.400 1.300-2.900 1.400 1.700 1.400-1.700 1.500 2c.8.300 1.500.7 2.200 1.200z"/><circle cx="1443.800" cy="1176.400" r="1" fill="#cccccc" stroke="none"/></g><g fill="none" stroke="#cccccc" stroke-width="1.700"><circle cx="1656" cy="1180.300" r="9.800"/><path d="M1649 1187.300 1663 1173.300"/></g><path fill="none" stroke="#cccccc" stroke-width="1.700" stroke-linejoin="round" d="M1845.600 1187.800 1837.200 1179.600a5 5 0 0 1 0-6.500 4.700 4.700 0 0 1 6.700 0l1.700 1.700 1.700-1.700a4.700 4.700 0 0 1 6.700 0 5 5 0 0 1 0 6.500z"/><g fill="none" stroke="#cccccc" stroke-width="1.700" stroke-linejoin="round" stroke-linecap="round"><path d="M1893.400 1171.300c-3.500 0-6 2.700-6 6v4.400l-1.900 3.300c-.3.600.1 1.200.7 1.200H1900.600c.6 0 1-.6.700-1.200l-1.900-3.300V1177.300"/><path d="M1891 1186.700a2.400 2.400 0 0 0 4.800 0"/></g><circle cx="1899" cy="1174" r="4.600" fill="#d6dfea"/></svg>
<span class="t" style="left:65.00px;top:11.92px;font-size:19px;line-height:25px;color:#cccccc;letter-spacing:-0.469px;">File</span>
<span class="t" style="left:118.00px;top:11.92px;font-size:19px;line-height:25px;color:#cccccc;letter-spacing:-0.062px;">Edit</span>
<span class="t" style="left:174.50px;top:11.92px;font-size:19px;line-height:25px;color:#cccccc;letter-spacing:-0.019px;">Selection</span>
<span class="t" style="left:277.00px;top:11.92px;font-size:19px;line-height:25px;color:#cccccc;letter-spacing:0.039px;">View</span>
<span class="t" style="left:341.50px;top:11.92px;font-size:19px;line-height:25px;color:#cccccc;letter-spacing:-0.180px;">Go</span>
<span class="t" style="left:391.00px;top:11.92px;font-size:19px;line-height:25px;color:#cccccc;letter-spacing:-0.620px;">Run</span>
<span class="t" style="left:650.00px;top:12.19px;font-size:18.8px;line-height:24px;color:#9a9a9a;letter-spacing:-1.743px;">Java</span>
<span class="t" style="left:102.00px;top:67.65px;font-size:16.3px;line-height:21px;color:#cccccc;letter-spacing:-1.711px;">EXPLORER</span>
<span class="t" style="left:102.40px;top:109.45px;font-size:16.6px;line-height:22px;color:#cccccc;letter-spacing:-0.733px;font-weight:bold;">OPEN EDITORS</span>
<span class="t" style="left:147.60px;top:140.92px;font-size:19px;line-height:25px;color:#cccccc;letter-spacing:-0.313px;">CreationLL.java</span>
<span class="t" style="left:285.00px;top:142.44px;font-size:17.5px;line-height:23px;color:#9d9d9d;letter-spacing:0.072px;">Cohort\Linked...</span>
<span class="t" style="left:147.60px;top:173.92px;font-size:19px;line-height:25px;color:#f08474;letter-spacing:-0.080px;">InsertAtFirst.java</span>
<span class="t" style="left:297.00px;top:175.44px;font-size:17.5px;line-height:23px;color:#c77a6c;letter-spacing:0.064px;">Cohort...</span>
<span class="t" style="left:147.60px;top:206.92px;font-size:19px;line-height:25px;color:#cccccc;letter-spacing:-0.184px;">InsertAtLast.java</span>
<span class="t" style="left:295.00px;top:208.44px;font-size:17.5px;line-height:23px;color:#9d9d9d;letter-spacing:0.059px;">Cohort\Linke...</span>
<span class="t" style="left:377.00px;top:175.44px;font-size:17.5px;line-height:23px;color:#c77a6c;letter-spacing:-0.234px;">2</span>
<span class="t" style="left:102.40px;top:242.45px;font-size:16.6px;line-height:22px;color:#cccccc;letter-spacing:-0.803px;font-weight:bold;">JAVA</span>
<span class="t" style="left:150.40px;top:272.72px;font-size:19px;line-height:25px;color:#e8857d;letter-spacing:0.345px;">Cohort</span>
<span class="t" style="left:162.60px;top:305.72px;font-size:19px;line-height:25px;color:#cccccc;letter-spacing:-0.213px;">LeetCode</span>
<span class="t" style="left:174.30px;top:343.72px;font-size:19px;line-height:25px;color:#cccccc;letter-spacing:-0.175px;">SpiralMat.class</span>
<span class="t" style="left:174.30px;top:376.72px;font-size:19px;line-height:25px;color:#cccccc;letter-spacing:-0.028px;">SpiralMat.java</span>
<span class="t" style="left:174.30px;top:409.72px;font-size:19px;line-height:25px;color:#cccccc;letter-spacing:-0.254px;">SubArraykaSum.java</span>
<span class="t" style="left:174.30px;top:442.72px;font-size:19px;line-height:25px;color:#cccccc;letter-spacing:-0.418px;">SubArraySumK.class</span>
<span class="t" style="left:174.30px;top:475.72px;font-size:19px;line-height:25px;color:#cccccc;letter-spacing:-0.352px;">SubArraySumK.java</span>
<span class="t" style="left:174.30px;top:508.72px;font-size:19px;line-height:25px;color:#cccccc;letter-spacing:-0.540px;">Sum3.class</span>
<span class="t" style="left:174.30px;top:541.72px;font-size:19px;line-height:25px;color:#cccccc;letter-spacing:-0.387px;">Sum3.java</span>
<span class="t" style="left:174.30px;top:574.72px;font-size:19px;line-height:25px;color:#cccccc;letter-spacing:-0.201px;">TrappingRainW.class</span>
<span class="t" style="left:174.30px;top:607.72px;font-size:19px;line-height:25px;color:#cccccc;letter-spacing:-0.088px;">TrappingRainW.java</span>
<span class="t" style="left:162.60px;top:640.72px;font-size:19px;line-height:25px;color:#f4806a;letter-spacing:-0.077px;">Linked List</span>
<span class="t" style="left:174.30px;top:673.72px;font-size:19px;line-height:25px;color:#cccccc;letter-spacing:-0.408px;">CreationLL.class</span>
<span class="t" style="left:174.30px;top:706.72px;font-size:19px;line-height:25px;color:#cccccc;letter-spacing:-0.306px;">CreationLL.java</span>
<span class="t" style="left:174.30px;top:739.72px;font-size:19px;line-height:25px;color:#cccccc;letter-spacing:-0.199px;">InsertAtFirst.class</span>
<span class="t" style="left:174.30px;top:772.72px;font-size:19px;line-height:25px;color:#ffffff;letter-spacing:-0.075px;">InsertAtFirst.java</span>
<span class="t" style="left:174.30px;top:805.72px;font-size:19px;line-height:25px;color:#cccccc;letter-spacing:-0.253px;">InsertAtLast.class</span>
<span class="t" style="left:174.30px;top:838.72px;font-size:19px;line-height:25px;color:#cccccc;letter-spacing:-0.167px;">InsertAtLast.java</span>
<span class="t" style="left:174.30px;top:871.72px;font-size:19px;line-height:25px;color:#cccccc;letter-spacing:-0.250px;">Node.class</span>
<span class="t" style="left:174.30px;top:904.72px;font-size:19px;line-height:25px;color:#cccccc;letter-spacing:-0.080px;">tempCodeRunnerFile.java</span>
<span class="t" style="left:377.40px;top:773.94px;font-size:17.5px;line-height:23px;color:#c3d3e3;letter-spacing:-0.334px;">2</span>
<span class="t" style="left:162.60px;top:937.72px;font-size:19px;line-height:25px;color:#cccccc;letter-spacing:0.363px;">Math</span>
<span class="t" style="left:162.60px;top:970.72px;font-size:19px;line-height:25px;color:#cccccc;letter-spacing:-0.285px;">Searching</span>
<span class="t" style="left:162.60px;top:1003.72px;font-size:19px;line-height:25px;color:#cccccc;letter-spacing:-0.277px;">Strings</span>
<span class="t" style="left:150.40px;top:1036.72px;font-size:19px;line-height:25px;color:#cccccc;letter-spacing:-0.455px;">DSA in Java</span>
<span class="t" style="left:150.40px;top:1069.72px;font-size:19px;line-height:25px;color:#cccccc;letter-spacing:-1.064px;">OOPS_in_Java</span>
<span class="t" style="left:102.40px;top:1137.45px;font-size:16.6px;line-height:22px;color:#cccccc;letter-spacing:-1.028px;font-weight:bold;">VS CODE PETS</span>
<span class="t" style="left:461.00px;top:65.42px;font-size:19px;line-height:25px;color:#9d9d9d;letter-spacing:-0.306px;">CreationLL.java</span>
<span class="t" style="left:682.00px;top:65.42px;font-size:19px;line-height:25px;color:#f08474;letter-spacing:-0.197px;">InsertAtFirst.java</span>
<span class="t" style="left:830.00px;top:65.42px;font-size:19px;line-height:25px;color:#c77a6c;letter-spacing:-2.078px;">2</span>
<span class="t" style="left:931.00px;top:65.42px;font-size:19px;line-height:25px;color:#9d9d9d;letter-spacing:-0.208px;">InsertAtLast.java</span>
<span class="t" style="left:437.00px;top:107.92px;font-size:19px;line-height:25px;color:#a9a9a9;letter-spacing:0.328px;">Cohort</span>
<span class="t" style="left:520.50px;top:107.92px;font-size:19px;line-height:25px;color:#a9a9a9;letter-spacing:-0.122px;">Linked List</span>
<span class="t" style="left:668.00px;top:107.92px;font-size:19px;line-height:25px;color:#a9a9a9;letter-spacing:-0.141px;">InsertAtFirst.java</span>
<span class="t" style="left:861.00px;top:107.92px;font-size:19px;line-height:25px;color:#a9a9a9;letter-spacing:0.046px;">InsertAtFirst</span>
<span class="t" style="left:1017.50px;top:107.92px;font-size:19px;line-height:25px;color:#a9a9a9;letter-spacing:0.012px;">main(String[] args)</span>
<span class="t" style="left:561.50px;top:1077.96px;font-size:18.6px;line-height:24px;color:#999999;letter-spacing:-0.405px;">Run main | Debug main</span>
<span class="t" style="left:199.40px;top:1169.66px;font-size:18px;line-height:23px;color:#cccccc;letter-spacing:-0.700px;">BLACKBOX Agent</span>
<span class="t" style="left:362.00px;top:1169.66px;font-size:18px;line-height:23px;color:#cccccc;letter-spacing:0.026px;">Indexing completed.</span>
<span class="t" style="left:548.00px;top:1169.66px;font-size:18px;line-height:23px;color:#cccccc;letter-spacing:-0.145px;">Open Website</span>
<span class="t" style="left:724.00px;top:1169.66px;font-size:18px;line-height:23px;color:#cccccc;letter-spacing:-0.324px;">Ln 38, Col 12 (69 selected)</span>
<span class="t" style="left:955.80px;top:1169.66px;font-size:18px;line-height:23px;color:#cccccc;letter-spacing:-0.818px;">Spaces: 4</span>
<span class="t" style="left:1052.70px;top:1169.66px;font-size:18px;line-height:23px;color:#cccccc;letter-spacing:-0.700px;">UTF-8</span>
<span class="t" style="left:1124.00px;top:1169.66px;font-size:18px;line-height:23px;color:#cccccc;letter-spacing:-1.879px;">CRLF</span>
<span class="t" style="left:1190.30px;top:1169.16px;font-size:18px;line-height:23px;color:#cccccc;letter-spacing:0.556px;">{ }</span>
<span class="t" style="left:1221.00px;top:1169.66px;font-size:18px;line-height:23px;color:#cccccc;letter-spacing:-1.383px;">Java</span>
<span class="t" style="left:1355.40px;top:1169.66px;font-size:18px;line-height:23px;color:#cccccc;letter-spacing:-0.635px;">Go Live</span>
<span class="t" style="left:1515.80px;top:1169.66px;font-size:18px;line-height:23px;color:#cccccc;letter-spacing:-0.322px;">AI Code Chat</span>
<span class="t" style="left:1673.80px;top:1169.66px;font-size:18px;line-height:23px;color:#cccccc;letter-spacing:-0.141px;">Prettier</span>
<span class="t" style="left:1755.00px;top:1169.66px;font-size:18px;line-height:23px;color:#cccccc;letter-spacing:-0.300px;">Zero Two</span>
</body></html>
